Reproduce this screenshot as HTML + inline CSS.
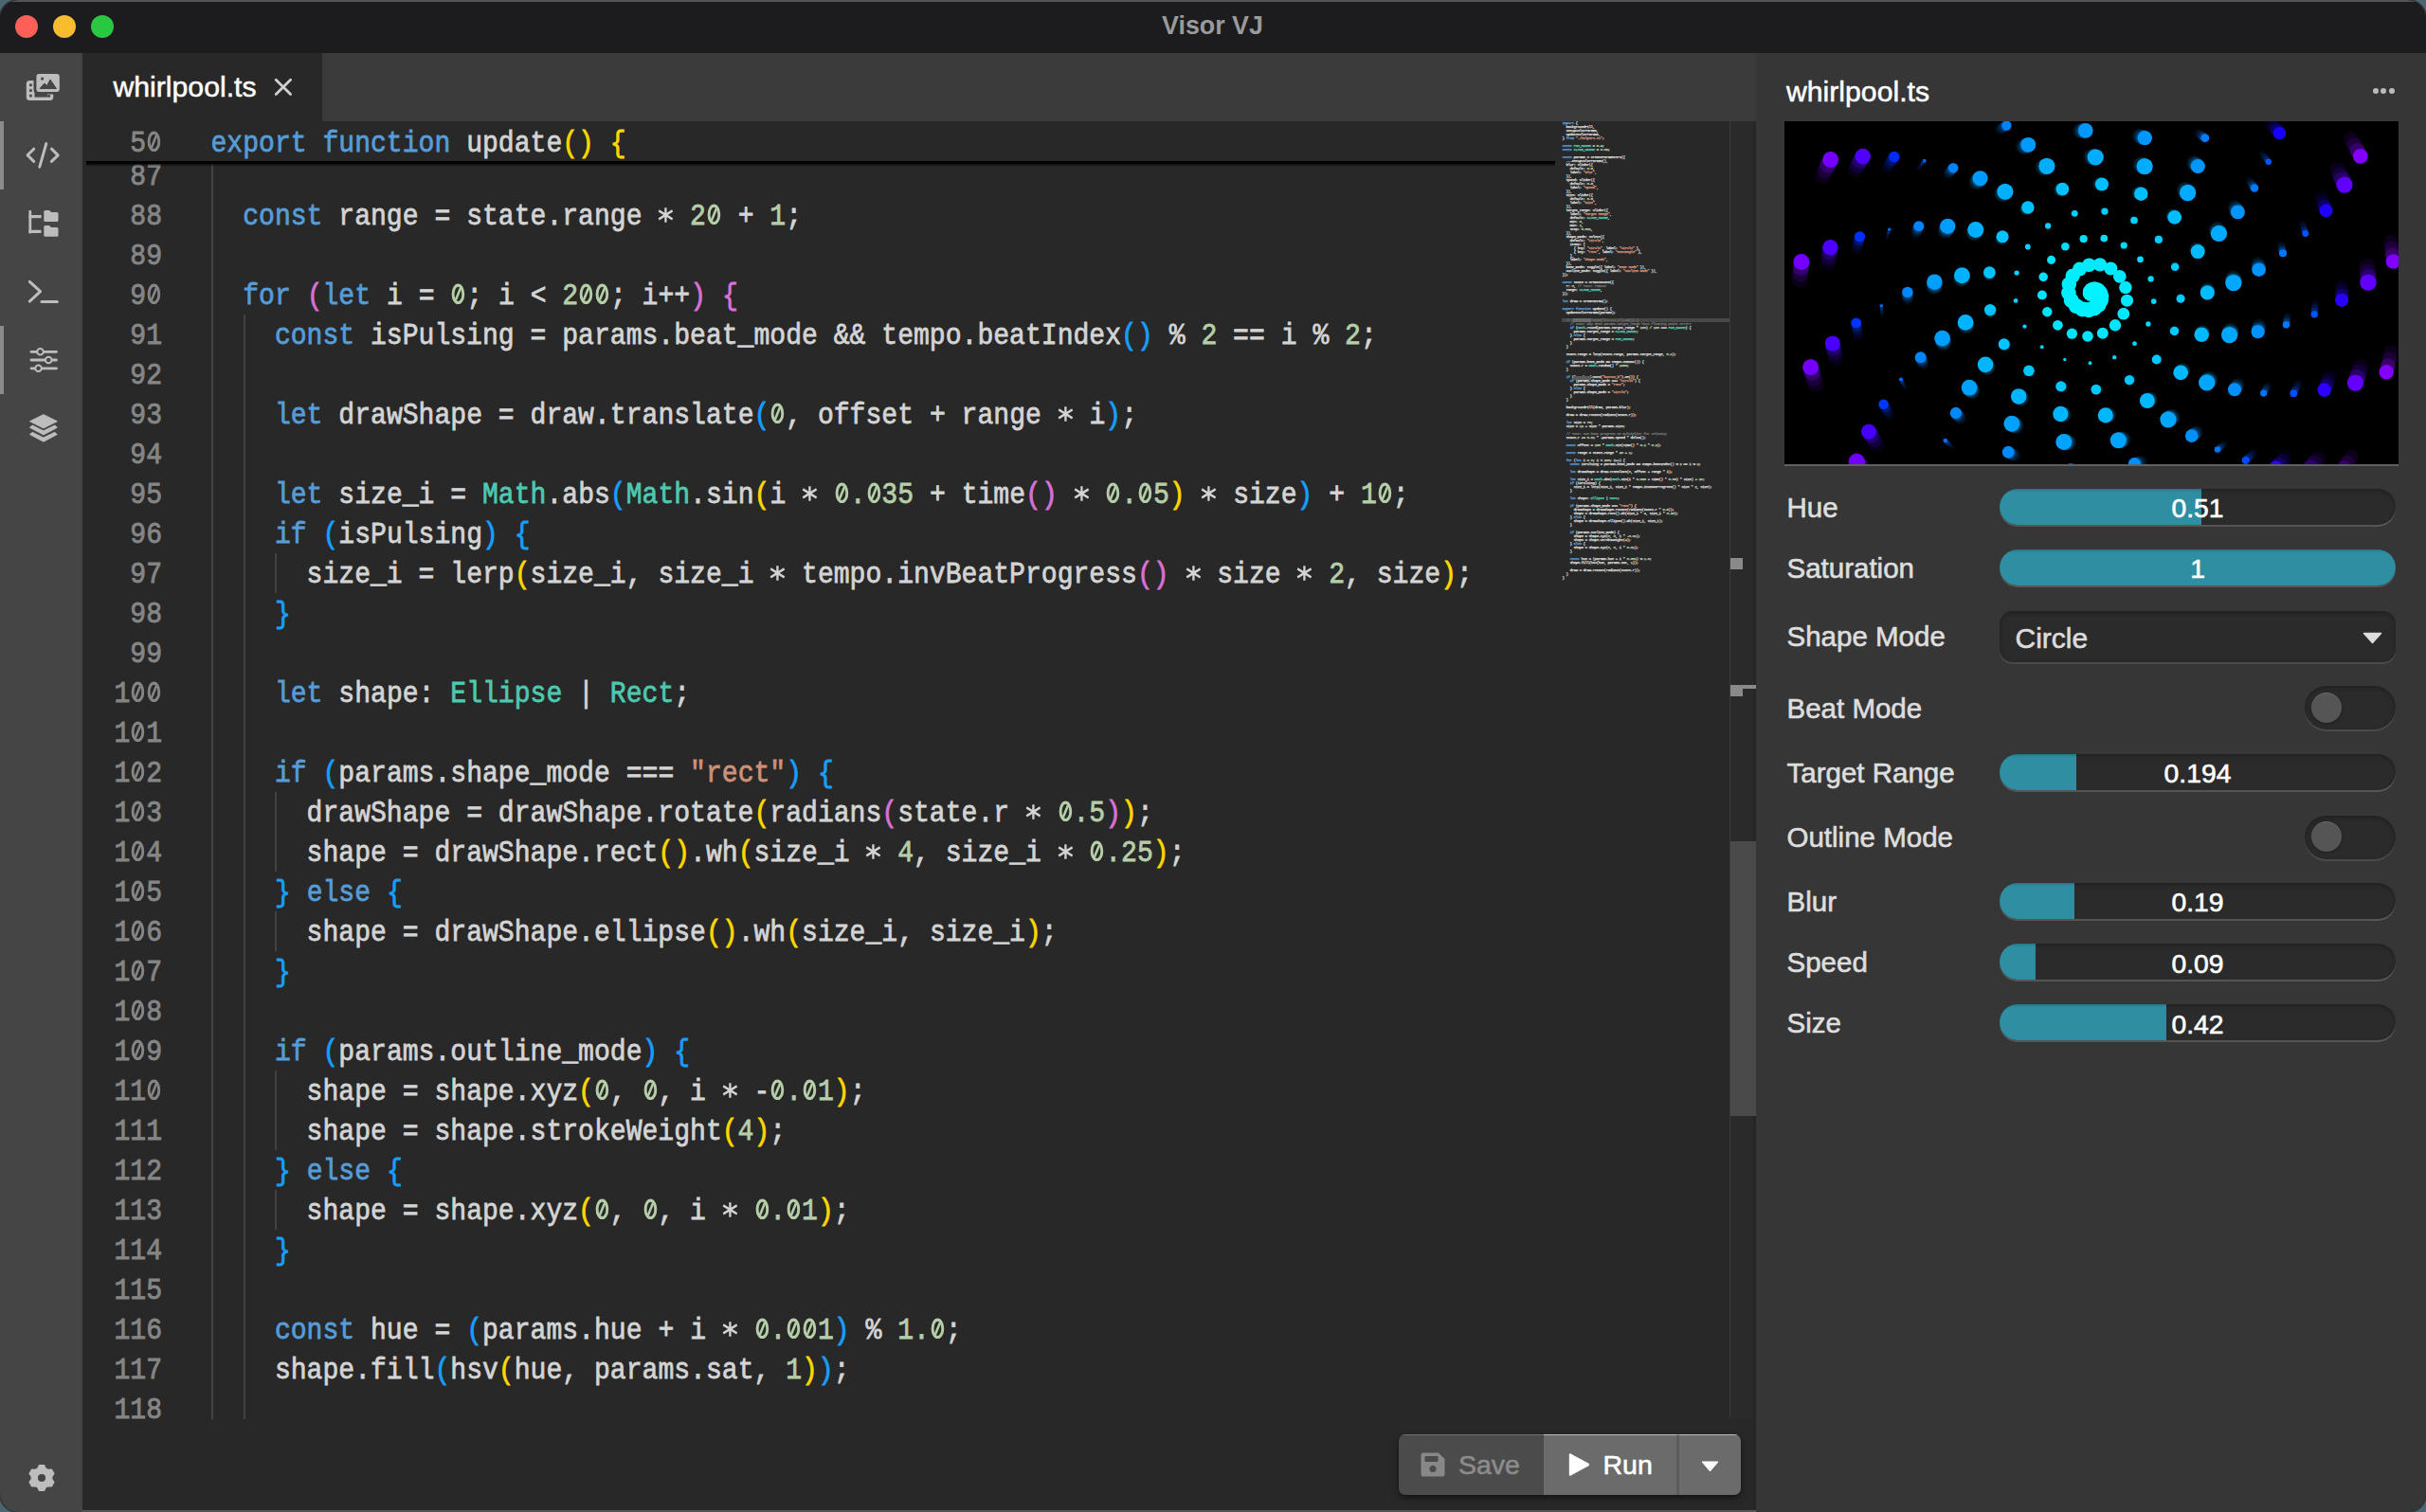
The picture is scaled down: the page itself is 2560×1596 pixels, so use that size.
<!DOCTYPE html><html><head><meta charset="utf-8"><style>
*{margin:0;padding:0;box-sizing:border-box}
html,body{width:2560px;height:1596px;overflow:hidden;background:#4b6670}
body{position:relative;font-family:"Liberation Sans",sans-serif}
#win{position:absolute;left:0;top:0;width:2560px;height:1596px;border-radius:20px;overflow:hidden;background:#282828;box-shadow:0 0 0 1.5px rgba(40,40,40,.7)}
.tl{position:absolute;top:16px;width:24px;height:24px;border-radius:50%}
.ln{position:absolute;left:87px;width:84px;height:42px;text-align:right;font-family:"Liberation Mono",monospace;font-size:28.09px;line-height:42px;color:#858585;white-space:pre;transform:scaleY(1.12);transform-origin:0 28.5px;-webkit-text-stroke:0.8px #858585}
.cl{position:absolute;left:222.5px;height:42px;font-family:"Liberation Mono",monospace;font-size:28.09px;line-height:42px;color:#d4d4d4;white-space:pre;transform:scaleY(1.12);transform-origin:0 28.5px;-webkit-text-stroke:0.7px currentColor}
.cl span{-webkit-text-stroke:0.7px currentColor}
.ast{display:inline-block;vertical-align:baseline}
.mm{position:absolute;left:1648.5px;height:4px;font-family:"Liberation Mono",monospace;font-size:4.4px;letter-spacing:-0.64px;line-height:4px;color:#d4d4d4;white-space:pre;-webkit-text-stroke:0.25px currentColor}
.mm span{-webkit-text-stroke:0.25px currentColor}
.lbl{position:absolute}
.sl{position:absolute;left:2110px;width:418px;height:38px;border-radius:19px;background:#2b2b2b;overflow:hidden;box-shadow:inset 0 2px 4px rgba(0,0,0,.25),0 2px 0 #555}
.sl .f{position:absolute;left:0;top:0;height:38px;background:#2e8ea2;box-shadow:inset 0 3px 3px -2px rgba(0,0,0,.25)}
.tg{position:absolute;left:2432px;width:96px;height:46px;border-radius:23px;background:#2b2b2b;box-shadow:inset 0 2px 5px rgba(0,0,0,.3),0 2px 0 #4a4a4a}
.tg .k{position:absolute;left:7px;top:6.5px;width:32px;height:32px;border-radius:50%;background:#555;box-shadow:inset 0 1px 0 rgba(255,255,255,.12),0 1px 3px rgba(0,0,0,.35)}
</style></head><body><div id="win">
<div style="position:absolute;left:0;top:0;width:2560px;height:56px;background:#1c1c1e"></div>
<div style="position:absolute;left:0;top:0;width:2560px;height:2px;background:#555"></div>
<div style="position:absolute;left:1129.50px;width:300px;text-align:center;top:13.81px;font-size:26.8px;line-height:26.8px;color:#9a9a9a;white-space:nowrap;font-weight:bold;-webkit-text-stroke:0px #9a9a9a">Visor VJ</div>
<div class="tl" style="left:16px;background:#fe5f57"></div><div class="tl" style="left:56px;background:#f8bd2e"></div><div class="tl" style="left:96px;background:#29c840"></div>
<div style="position:absolute;left:0;top:56px;width:87px;height:1540px;background:#454545"></div>

<div style="position:absolute;left:0;top:128px;width:4px;height:72px;background:#8c8c8c"></div>
<div style="position:absolute;left:0;top:344px;width:4px;height:72px;background:#8c8c8c"></div>
<svg style="position:absolute;left:0;top:56px" width="87" height="440" viewBox="0 56 87 440">
  <!-- media icon -->
  <rect x="27.8" y="85" width="28.4" height="21" rx="3.5" fill="#bdbdbd"/>
  <rect x="35.5" y="75.5" width="30" height="24" rx="5" fill="#454545"/>
  <rect x="38.4" y="78" width="24.4" height="19" rx="3" fill="#bdbdbd"/>
  <circle cx="32.4" cy="89.8" r="1.5" fill="#454545"/>
  <circle cx="32.4" cy="95.4" r="1.5" fill="#454545"/>
  <circle cx="32.4" cy="101" r="1.5" fill="#454545"/>
  <circle cx="51.6" cy="101.2" r="1.5" fill="#454545"/>
  <rect x="36.5" y="97" width="13.5" height="5.6" fill="#454545"/>
  <circle cx="44.6" cy="83.1" r="1.6" fill="#454545"/>
  <path d="M42 93.5 L47 88 L49.5 90.5 L53 84 L59.5 93.5 Z" fill="#454545" stroke="#454545" stroke-width="1" stroke-linejoin="round"/>
  <!-- code icon -->
  <g fill="none" stroke="#bdbdbd" stroke-width="3" stroke-linecap="round" stroke-linejoin="round">
    <path d="M35.7 157.2 L29 163.8 L35.7 170.4"/>
    <path d="M54.4 157.2 L61.2 163.8 L54.4 170.4"/>
    <path d="M48.8 151.6 L41.8 176.2"/>
  </g>
  <!-- tree icon -->
  <g fill="#bdbdbd">
    <rect x="30.4" y="222" width="2.8" height="24.5" rx="1"/>
    <rect x="30.4" y="227" width="13.2" height="3.2"/>
    <rect x="30.4" y="242.8" width="13.2" height="3.2" rx="1"/>
    <path d="M46.3 223.5 Q46.3 222 47.8 222 L52 222 L54 224 L60 224 Q61.5 224 61.5 225.5 L61.5 232.5 Q61.5 234 60 234 L47.8 234 Q46.3 234 46.3 232.5 Z"/>
    <path d="M46.3 239.5 Q46.3 238 47.8 238 L52 238 L54 240 L60 240 Q61.5 240 61.5 241.5 L61.5 248.3 Q61.5 249.8 60 249.8 L47.8 249.8 Q46.3 249.8 46.3 248.3 Z"/>
  </g>
  <!-- terminal icon -->
  <g fill="none" stroke="#bdbdbd" stroke-width="3" stroke-linecap="round" stroke-linejoin="round">
    <path d="M31.3 297.3 L42.6 307.7 L31.3 318.1"/>
    <path d="M44 318.4 L60.3 318.4"/>
  </g>
  <!-- sliders icon -->
  <g stroke="#bdbdbd" stroke-width="2.8" stroke-linecap="round" fill="none">
    <path d="M33 371.3 H59.5"/><path d="M33 380 H59.5"/><path d="M33 388.8 H59.5"/>
  </g>
  <g fill="#454545" stroke="#bdbdbd" stroke-width="2">
    <circle cx="42.5" cy="371.3" r="3.3"/><circle cx="51.2" cy="380" r="3.3"/><circle cx="40.5" cy="388.8" r="3.3"/>
  </g>
  <!-- layers icon -->
  <g fill="#bdbdbd" stroke="#bdbdbd" stroke-width="1.2" stroke-linejoin="round">
    <path d="M31.8 444.8 L45.9 437.9 L60 444.8 L45.9 451.7 Z"/>
    <path d="M34.2 449.3 L45.9 455 L57.6 449.3 L60 451.2 L45.9 458.6 L31.8 451.2 Z"/>
    <path d="M34.2 456.6 L45.9 462.3 L57.6 456.6 L60 458.5 L45.9 466 L31.8 458.5 Z"/>
  </g>
</svg>
<svg style="position:absolute;left:23.9px;top:1539.9px" width="40" height="40" viewBox="0 0 40 40"><path fill="#bdbdbd" stroke="#bdbdbd" stroke-width="2.2" stroke-linejoin="round" d="M16.40 10.10 L17.70 7.00 L22.30 7.00 L23.60 10.10 L26.77 11.93 L30.11 11.51 L32.41 15.49 L30.37 18.17 L30.37 21.83 L32.41 24.51 L30.11 28.49 L26.77 28.07 L23.60 29.90 L22.30 33.00 L17.70 33.00 L16.40 29.90 L13.23 28.07 L9.89 28.49 L7.59 24.51 L9.63 21.83 L9.63 18.17 L7.59 15.49 L9.89 11.51 L13.23 11.93 Z"/><circle cx="20" cy="20" r="4.1" fill="#454545"/></svg>

<div style="position:absolute;left:87px;top:56px;width:1766px;height:72px;background:#3b3b3b"></div>
<div style="position:absolute;left:87px;top:56px;width:253px;height:72px;background:#282828"></div>
<div style="position:absolute;left:119.5px;top:77.24px;font-size:30.2px;line-height:30.2px;color:#ffffff;font-weight:normal;white-space:nowrap;-webkit-text-stroke:0.5px #ffffff;">whirlpool.ts</div>
<svg style="position:absolute;left:288px;top:81px" width="22" height="22" viewBox="0 0 22 22"><path d="M3.2 3.2 L18.6 18.6 M18.6 3.2 L3.2 18.6" stroke="#d0d0d0" stroke-width="2.8" stroke-linecap="round"/></svg>
<div style="position:absolute;left:222.9px;top:170.0px;width:2px;height:36.4px;background:#424242"></div>
<div style="position:absolute;left:222.9px;top:206.4px;width:2px;height:42.0px;background:#424242"></div>
<div style="position:absolute;left:222.9px;top:248.4px;width:2px;height:42.0px;background:#424242"></div>
<div style="position:absolute;left:222.9px;top:290.4px;width:2px;height:42.0px;background:#424242"></div>
<div style="position:absolute;left:222.9px;top:332.4px;width:2px;height:42.0px;background:#424242"></div>
<div style="position:absolute;left:256.6px;top:332.4px;width:2px;height:42.0px;background:#424242"></div>
<div style="position:absolute;left:222.9px;top:374.4px;width:2px;height:42.0px;background:#424242"></div>
<div style="position:absolute;left:256.6px;top:374.4px;width:2px;height:42.0px;background:#424242"></div>
<div style="position:absolute;left:222.9px;top:416.4px;width:2px;height:42.0px;background:#424242"></div>
<div style="position:absolute;left:256.6px;top:416.4px;width:2px;height:42.0px;background:#424242"></div>
<div style="position:absolute;left:222.9px;top:458.4px;width:2px;height:42.0px;background:#424242"></div>
<div style="position:absolute;left:256.6px;top:458.4px;width:2px;height:42.0px;background:#424242"></div>
<div style="position:absolute;left:222.9px;top:500.4px;width:2px;height:42.0px;background:#424242"></div>
<div style="position:absolute;left:256.6px;top:500.4px;width:2px;height:42.0px;background:#424242"></div>
<div style="position:absolute;left:222.9px;top:542.4px;width:2px;height:42.0px;background:#424242"></div>
<div style="position:absolute;left:256.6px;top:542.4px;width:2px;height:42.0px;background:#424242"></div>
<div style="position:absolute;left:222.9px;top:584.4px;width:2px;height:42.0px;background:#424242"></div>
<div style="position:absolute;left:256.6px;top:584.4px;width:2px;height:42.0px;background:#424242"></div>
<div style="position:absolute;left:290.3px;top:584.4px;width:2px;height:42.0px;background:#424242"></div>
<div style="position:absolute;left:222.9px;top:626.4px;width:2px;height:42.0px;background:#424242"></div>
<div style="position:absolute;left:256.6px;top:626.4px;width:2px;height:42.0px;background:#424242"></div>
<div style="position:absolute;left:222.9px;top:668.4px;width:2px;height:42.0px;background:#424242"></div>
<div style="position:absolute;left:256.6px;top:668.4px;width:2px;height:42.0px;background:#424242"></div>
<div style="position:absolute;left:222.9px;top:710.4px;width:2px;height:42.0px;background:#424242"></div>
<div style="position:absolute;left:256.6px;top:710.4px;width:2px;height:42.0px;background:#424242"></div>
<div style="position:absolute;left:222.9px;top:752.4px;width:2px;height:42.0px;background:#424242"></div>
<div style="position:absolute;left:256.6px;top:752.4px;width:2px;height:42.0px;background:#424242"></div>
<div style="position:absolute;left:222.9px;top:794.4px;width:2px;height:42.0px;background:#424242"></div>
<div style="position:absolute;left:256.6px;top:794.4px;width:2px;height:42.0px;background:#424242"></div>
<div style="position:absolute;left:222.9px;top:836.4px;width:2px;height:42.0px;background:#424242"></div>
<div style="position:absolute;left:256.6px;top:836.4px;width:2px;height:42.0px;background:#424242"></div>
<div style="position:absolute;left:290.3px;top:836.4px;width:2px;height:42.0px;background:#424242"></div>
<div style="position:absolute;left:222.9px;top:878.4px;width:2px;height:42.0px;background:#424242"></div>
<div style="position:absolute;left:256.6px;top:878.4px;width:2px;height:42.0px;background:#424242"></div>
<div style="position:absolute;left:290.3px;top:878.4px;width:2px;height:42.0px;background:#424242"></div>
<div style="position:absolute;left:222.9px;top:920.4px;width:2px;height:42.0px;background:#424242"></div>
<div style="position:absolute;left:256.6px;top:920.4px;width:2px;height:42.0px;background:#424242"></div>
<div style="position:absolute;left:222.9px;top:962.4px;width:2px;height:42.0px;background:#424242"></div>
<div style="position:absolute;left:256.6px;top:962.4px;width:2px;height:42.0px;background:#424242"></div>
<div style="position:absolute;left:290.3px;top:962.4px;width:2px;height:42.0px;background:#424242"></div>
<div style="position:absolute;left:222.9px;top:1004.4px;width:2px;height:42.0px;background:#424242"></div>
<div style="position:absolute;left:256.6px;top:1004.4px;width:2px;height:42.0px;background:#424242"></div>
<div style="position:absolute;left:222.9px;top:1046.4px;width:2px;height:42.0px;background:#424242"></div>
<div style="position:absolute;left:256.6px;top:1046.4px;width:2px;height:42.0px;background:#424242"></div>
<div style="position:absolute;left:222.9px;top:1088.4px;width:2px;height:42.0px;background:#424242"></div>
<div style="position:absolute;left:256.6px;top:1088.4px;width:2px;height:42.0px;background:#424242"></div>
<div style="position:absolute;left:222.9px;top:1130.4px;width:2px;height:42.0px;background:#424242"></div>
<div style="position:absolute;left:256.6px;top:1130.4px;width:2px;height:42.0px;background:#424242"></div>
<div style="position:absolute;left:290.3px;top:1130.4px;width:2px;height:42.0px;background:#424242"></div>
<div style="position:absolute;left:222.9px;top:1172.4px;width:2px;height:42.0px;background:#424242"></div>
<div style="position:absolute;left:256.6px;top:1172.4px;width:2px;height:42.0px;background:#424242"></div>
<div style="position:absolute;left:290.3px;top:1172.4px;width:2px;height:42.0px;background:#424242"></div>
<div style="position:absolute;left:222.9px;top:1214.4px;width:2px;height:42.0px;background:#424242"></div>
<div style="position:absolute;left:256.6px;top:1214.4px;width:2px;height:42.0px;background:#424242"></div>
<div style="position:absolute;left:222.9px;top:1256.4px;width:2px;height:42.0px;background:#424242"></div>
<div style="position:absolute;left:256.6px;top:1256.4px;width:2px;height:42.0px;background:#424242"></div>
<div style="position:absolute;left:290.3px;top:1256.4px;width:2px;height:42.0px;background:#424242"></div>
<div style="position:absolute;left:222.9px;top:1298.4px;width:2px;height:42.0px;background:#424242"></div>
<div style="position:absolute;left:256.6px;top:1298.4px;width:2px;height:42.0px;background:#424242"></div>
<div style="position:absolute;left:222.9px;top:1340.4px;width:2px;height:42.0px;background:#424242"></div>
<div style="position:absolute;left:256.6px;top:1340.4px;width:2px;height:42.0px;background:#424242"></div>
<div style="position:absolute;left:222.9px;top:1382.4px;width:2px;height:42.0px;background:#424242"></div>
<div style="position:absolute;left:256.6px;top:1382.4px;width:2px;height:42.0px;background:#424242"></div>
<div style="position:absolute;left:222.9px;top:1424.4px;width:2px;height:42.0px;background:#424242"></div>
<div style="position:absolute;left:256.6px;top:1424.4px;width:2px;height:42.0px;background:#424242"></div>
<div style="position:absolute;left:222.9px;top:1466.4px;width:2px;height:31.6px;background:#424242"></div>
<div style="position:absolute;left:256.6px;top:1466.4px;width:2px;height:31.6px;background:#424242"></div>
<div class="ln" style="top:132px">5<svg class="ast" width="16.854" height="20" viewBox="0 0 16.854 20"><ellipse cx="8.43" cy="10.6" rx="5.35" ry="8.3" stroke="#858585" stroke-width="2.9" fill="none"/><path d="M5.9 16.2L11.0 5.0" stroke="#858585" stroke-width="2.5"/></svg></div><div class="cl" style="top:132px"><span style="color:#569cd6">export</span> <span style="color:#569cd6">function</span> <span style="color:#d4d4d4">update</span><span style="color:#ffd700">(</span><span style="color:#ffd700">)</span> <span style="color:#ffd700">{</span></div>
<div class="ln" style="top:166.8px">87</div><div class="cl" style="top:166.8px"></div>
<div class="ln" style="top:208.8px">88</div><div class="cl" style="top:208.8px">  <span style="color:#569cd6">const</span> <span style="color:#d4d4d4">range</span> <span style="color:#d4d4d4">=</span> <span style="color:#d4d4d4">state</span><span style="color:#d4d4d4">.</span><span style="color:#d4d4d4">range</span> <span style="color:#d4d4d4"><svg class="ast" width="16.854" height="16.3" viewBox="0 0 16.854 16.3"><path d="M8.43 0.3V14M1.2 3.1L15.65 11.1M1.2 11.1L15.65 3.1" stroke="#d4d4d4" stroke-width="2.3" fill="none"/></svg></span> <span style="color:#b5cea8">2<svg class="ast" width="16.854" height="20" viewBox="0 0 16.854 20"><ellipse cx="8.43" cy="10.6" rx="5.35" ry="8.3" stroke="#b5cea8" stroke-width="2.9" fill="none"/><path d="M5.9 16.2L11.0 5.0" stroke="#b5cea8" stroke-width="2.5"/></svg></span> <span style="color:#d4d4d4">+</span> <span style="color:#b5cea8">1</span><span style="color:#d4d4d4">;</span></div>
<div class="ln" style="top:250.8px">89</div><div class="cl" style="top:250.8px"></div>
<div class="ln" style="top:292.8px">9<svg class="ast" width="16.854" height="20" viewBox="0 0 16.854 20"><ellipse cx="8.43" cy="10.6" rx="5.35" ry="8.3" stroke="#858585" stroke-width="2.9" fill="none"/><path d="M5.9 16.2L11.0 5.0" stroke="#858585" stroke-width="2.5"/></svg></div><div class="cl" style="top:292.8px">  <span style="color:#569cd6">for</span> <span style="color:#da70d6">(</span><span style="color:#569cd6">let</span> <span style="color:#d4d4d4">i</span> <span style="color:#d4d4d4">=</span> <span style="color:#b5cea8"><svg class="ast" width="16.854" height="20" viewBox="0 0 16.854 20"><ellipse cx="8.43" cy="10.6" rx="5.35" ry="8.3" stroke="#b5cea8" stroke-width="2.9" fill="none"/><path d="M5.9 16.2L11.0 5.0" stroke="#b5cea8" stroke-width="2.5"/></svg></span><span style="color:#d4d4d4">;</span> <span style="color:#d4d4d4">i</span> <span style="color:#d4d4d4">&lt;</span> <span style="color:#b5cea8">2<svg class="ast" width="16.854" height="20" viewBox="0 0 16.854 20"><ellipse cx="8.43" cy="10.6" rx="5.35" ry="8.3" stroke="#b5cea8" stroke-width="2.9" fill="none"/><path d="M5.9 16.2L11.0 5.0" stroke="#b5cea8" stroke-width="2.5"/></svg><svg class="ast" width="16.854" height="20" viewBox="0 0 16.854 20"><ellipse cx="8.43" cy="10.6" rx="5.35" ry="8.3" stroke="#b5cea8" stroke-width="2.9" fill="none"/><path d="M5.9 16.2L11.0 5.0" stroke="#b5cea8" stroke-width="2.5"/></svg></span><span style="color:#d4d4d4">;</span> <span style="color:#d4d4d4">i</span><span style="color:#d4d4d4">+</span><span style="color:#d4d4d4">+</span><span style="color:#da70d6">)</span> <span style="color:#da70d6">{</span></div>
<div class="ln" style="top:334.8px">91</div><div class="cl" style="top:334.8px">    <span style="color:#569cd6">const</span> <span style="color:#d4d4d4">isPulsing</span> <span style="color:#d4d4d4">=</span> <span style="color:#d4d4d4">params</span><span style="color:#d4d4d4">.</span><span style="color:#d4d4d4">beat_mode</span> <span style="color:#d4d4d4">&amp;</span><span style="color:#d4d4d4">&amp;</span> <span style="color:#d4d4d4">tempo</span><span style="color:#d4d4d4">.</span><span style="color:#d4d4d4">beatIndex</span><span style="color:#179fff">(</span><span style="color:#179fff">)</span> <span style="color:#d4d4d4">%</span> <span style="color:#b5cea8">2</span> <span style="color:#d4d4d4">=</span><span style="color:#d4d4d4">=</span> <span style="color:#d4d4d4">i</span> <span style="color:#d4d4d4">%</span> <span style="color:#b5cea8">2</span><span style="color:#d4d4d4">;</span></div>
<div class="ln" style="top:376.8px">92</div><div class="cl" style="top:376.8px"></div>
<div class="ln" style="top:418.8px">93</div><div class="cl" style="top:418.8px">    <span style="color:#569cd6">let</span> <span style="color:#d4d4d4">drawShape</span> <span style="color:#d4d4d4">=</span> <span style="color:#d4d4d4">draw</span><span style="color:#d4d4d4">.</span><span style="color:#d4d4d4">translate</span><span style="color:#179fff">(</span><span style="color:#b5cea8"><svg class="ast" width="16.854" height="20" viewBox="0 0 16.854 20"><ellipse cx="8.43" cy="10.6" rx="5.35" ry="8.3" stroke="#b5cea8" stroke-width="2.9" fill="none"/><path d="M5.9 16.2L11.0 5.0" stroke="#b5cea8" stroke-width="2.5"/></svg></span><span style="color:#d4d4d4">,</span> <span style="color:#d4d4d4">offset</span> <span style="color:#d4d4d4">+</span> <span style="color:#d4d4d4">range</span> <span style="color:#d4d4d4"><svg class="ast" width="16.854" height="16.3" viewBox="0 0 16.854 16.3"><path d="M8.43 0.3V14M1.2 3.1L15.65 11.1M1.2 11.1L15.65 3.1" stroke="#d4d4d4" stroke-width="2.3" fill="none"/></svg></span> <span style="color:#d4d4d4">i</span><span style="color:#179fff">)</span><span style="color:#d4d4d4">;</span></div>
<div class="ln" style="top:460.8px">94</div><div class="cl" style="top:460.8px"></div>
<div class="ln" style="top:502.8px">95</div><div class="cl" style="top:502.8px">    <span style="color:#569cd6">let</span> <span style="color:#d4d4d4">size_i</span> <span style="color:#d4d4d4">=</span> <span style="color:#4ec9b0">Math</span><span style="color:#d4d4d4">.</span><span style="color:#d4d4d4">abs</span><span style="color:#179fff">(</span><span style="color:#4ec9b0">Math</span><span style="color:#d4d4d4">.</span><span style="color:#d4d4d4">sin</span><span style="color:#ffd700">(</span><span style="color:#d4d4d4">i</span> <span style="color:#d4d4d4"><svg class="ast" width="16.854" height="16.3" viewBox="0 0 16.854 16.3"><path d="M8.43 0.3V14M1.2 3.1L15.65 11.1M1.2 11.1L15.65 3.1" stroke="#d4d4d4" stroke-width="2.3" fill="none"/></svg></span> <span style="color:#b5cea8"><svg class="ast" width="16.854" height="20" viewBox="0 0 16.854 20"><ellipse cx="8.43" cy="10.6" rx="5.35" ry="8.3" stroke="#b5cea8" stroke-width="2.9" fill="none"/><path d="M5.9 16.2L11.0 5.0" stroke="#b5cea8" stroke-width="2.5"/></svg>.<svg class="ast" width="16.854" height="20" viewBox="0 0 16.854 20"><ellipse cx="8.43" cy="10.6" rx="5.35" ry="8.3" stroke="#b5cea8" stroke-width="2.9" fill="none"/><path d="M5.9 16.2L11.0 5.0" stroke="#b5cea8" stroke-width="2.5"/></svg>35</span> <span style="color:#d4d4d4">+</span> <span style="color:#d4d4d4">time</span><span style="color:#da70d6">(</span><span style="color:#da70d6">)</span> <span style="color:#d4d4d4"><svg class="ast" width="16.854" height="16.3" viewBox="0 0 16.854 16.3"><path d="M8.43 0.3V14M1.2 3.1L15.65 11.1M1.2 11.1L15.65 3.1" stroke="#d4d4d4" stroke-width="2.3" fill="none"/></svg></span> <span style="color:#b5cea8"><svg class="ast" width="16.854" height="20" viewBox="0 0 16.854 20"><ellipse cx="8.43" cy="10.6" rx="5.35" ry="8.3" stroke="#b5cea8" stroke-width="2.9" fill="none"/><path d="M5.9 16.2L11.0 5.0" stroke="#b5cea8" stroke-width="2.5"/></svg>.<svg class="ast" width="16.854" height="20" viewBox="0 0 16.854 20"><ellipse cx="8.43" cy="10.6" rx="5.35" ry="8.3" stroke="#b5cea8" stroke-width="2.9" fill="none"/><path d="M5.9 16.2L11.0 5.0" stroke="#b5cea8" stroke-width="2.5"/></svg>5</span><span style="color:#ffd700">)</span> <span style="color:#d4d4d4"><svg class="ast" width="16.854" height="16.3" viewBox="0 0 16.854 16.3"><path d="M8.43 0.3V14M1.2 3.1L15.65 11.1M1.2 11.1L15.65 3.1" stroke="#d4d4d4" stroke-width="2.3" fill="none"/></svg></span> <span style="color:#d4d4d4">size</span><span style="color:#179fff">)</span> <span style="color:#d4d4d4">+</span> <span style="color:#b5cea8">1<svg class="ast" width="16.854" height="20" viewBox="0 0 16.854 20"><ellipse cx="8.43" cy="10.6" rx="5.35" ry="8.3" stroke="#b5cea8" stroke-width="2.9" fill="none"/><path d="M5.9 16.2L11.0 5.0" stroke="#b5cea8" stroke-width="2.5"/></svg></span><span style="color:#d4d4d4">;</span></div>
<div class="ln" style="top:544.8px">96</div><div class="cl" style="top:544.8px">    <span style="color:#569cd6">if</span> <span style="color:#179fff">(</span><span style="color:#d4d4d4">isPulsing</span><span style="color:#179fff">)</span> <span style="color:#179fff">{</span></div>
<div class="ln" style="top:586.8px">97</div><div class="cl" style="top:586.8px">      <span style="color:#d4d4d4">size_i</span> <span style="color:#d4d4d4">=</span> <span style="color:#d4d4d4">lerp</span><span style="color:#ffd700">(</span><span style="color:#d4d4d4">size_i</span><span style="color:#d4d4d4">,</span> <span style="color:#d4d4d4">size_i</span> <span style="color:#d4d4d4"><svg class="ast" width="16.854" height="16.3" viewBox="0 0 16.854 16.3"><path d="M8.43 0.3V14M1.2 3.1L15.65 11.1M1.2 11.1L15.65 3.1" stroke="#d4d4d4" stroke-width="2.3" fill="none"/></svg></span> <span style="color:#d4d4d4">tempo</span><span style="color:#d4d4d4">.</span><span style="color:#d4d4d4">invBeatProgress</span><span style="color:#da70d6">(</span><span style="color:#da70d6">)</span> <span style="color:#d4d4d4"><svg class="ast" width="16.854" height="16.3" viewBox="0 0 16.854 16.3"><path d="M8.43 0.3V14M1.2 3.1L15.65 11.1M1.2 11.1L15.65 3.1" stroke="#d4d4d4" stroke-width="2.3" fill="none"/></svg></span> <span style="color:#d4d4d4">size</span> <span style="color:#d4d4d4"><svg class="ast" width="16.854" height="16.3" viewBox="0 0 16.854 16.3"><path d="M8.43 0.3V14M1.2 3.1L15.65 11.1M1.2 11.1L15.65 3.1" stroke="#d4d4d4" stroke-width="2.3" fill="none"/></svg></span> <span style="color:#b5cea8">2</span><span style="color:#d4d4d4">,</span> <span style="color:#d4d4d4">size</span><span style="color:#ffd700">)</span><span style="color:#d4d4d4">;</span></div>
<div class="ln" style="top:628.8px">98</div><div class="cl" style="top:628.8px">    <span style="color:#179fff">}</span></div>
<div class="ln" style="top:670.8px">99</div><div class="cl" style="top:670.8px"></div>
<div class="ln" style="top:712.8px">1<svg class="ast" width="16.854" height="20" viewBox="0 0 16.854 20"><ellipse cx="8.43" cy="10.6" rx="5.35" ry="8.3" stroke="#858585" stroke-width="2.9" fill="none"/><path d="M5.9 16.2L11.0 5.0" stroke="#858585" stroke-width="2.5"/></svg><svg class="ast" width="16.854" height="20" viewBox="0 0 16.854 20"><ellipse cx="8.43" cy="10.6" rx="5.35" ry="8.3" stroke="#858585" stroke-width="2.9" fill="none"/><path d="M5.9 16.2L11.0 5.0" stroke="#858585" stroke-width="2.5"/></svg></div><div class="cl" style="top:712.8px">    <span style="color:#569cd6">let</span> <span style="color:#d4d4d4">shape</span><span style="color:#d4d4d4">:</span> <span style="color:#4ec9b0">Ellipse</span> <span style="color:#d4d4d4">|</span> <span style="color:#4ec9b0">Rect</span><span style="color:#d4d4d4">;</span></div>
<div class="ln" style="top:754.8px">1<svg class="ast" width="16.854" height="20" viewBox="0 0 16.854 20"><ellipse cx="8.43" cy="10.6" rx="5.35" ry="8.3" stroke="#858585" stroke-width="2.9" fill="none"/><path d="M5.9 16.2L11.0 5.0" stroke="#858585" stroke-width="2.5"/></svg>1</div><div class="cl" style="top:754.8px"></div>
<div class="ln" style="top:796.8px">1<svg class="ast" width="16.854" height="20" viewBox="0 0 16.854 20"><ellipse cx="8.43" cy="10.6" rx="5.35" ry="8.3" stroke="#858585" stroke-width="2.9" fill="none"/><path d="M5.9 16.2L11.0 5.0" stroke="#858585" stroke-width="2.5"/></svg>2</div><div class="cl" style="top:796.8px">    <span style="color:#569cd6">if</span> <span style="color:#179fff">(</span><span style="color:#d4d4d4">params</span><span style="color:#d4d4d4">.</span><span style="color:#d4d4d4">shape_mode</span> <span style="color:#d4d4d4">=</span><span style="color:#d4d4d4">=</span><span style="color:#d4d4d4">=</span> <span style="color:#ce9178">&quot;rect&quot;</span><span style="color:#179fff">)</span> <span style="color:#179fff">{</span></div>
<div class="ln" style="top:838.8px">1<svg class="ast" width="16.854" height="20" viewBox="0 0 16.854 20"><ellipse cx="8.43" cy="10.6" rx="5.35" ry="8.3" stroke="#858585" stroke-width="2.9" fill="none"/><path d="M5.9 16.2L11.0 5.0" stroke="#858585" stroke-width="2.5"/></svg>3</div><div class="cl" style="top:838.8px">      <span style="color:#d4d4d4">drawShape</span> <span style="color:#d4d4d4">=</span> <span style="color:#d4d4d4">drawShape</span><span style="color:#d4d4d4">.</span><span style="color:#d4d4d4">rotate</span><span style="color:#ffd700">(</span><span style="color:#d4d4d4">radians</span><span style="color:#da70d6">(</span><span style="color:#d4d4d4">state</span><span style="color:#d4d4d4">.</span><span style="color:#d4d4d4">r</span> <span style="color:#d4d4d4"><svg class="ast" width="16.854" height="16.3" viewBox="0 0 16.854 16.3"><path d="M8.43 0.3V14M1.2 3.1L15.65 11.1M1.2 11.1L15.65 3.1" stroke="#d4d4d4" stroke-width="2.3" fill="none"/></svg></span> <span style="color:#b5cea8"><svg class="ast" width="16.854" height="20" viewBox="0 0 16.854 20"><ellipse cx="8.43" cy="10.6" rx="5.35" ry="8.3" stroke="#b5cea8" stroke-width="2.9" fill="none"/><path d="M5.9 16.2L11.0 5.0" stroke="#b5cea8" stroke-width="2.5"/></svg>.5</span><span style="color:#da70d6">)</span><span style="color:#ffd700">)</span><span style="color:#d4d4d4">;</span></div>
<div class="ln" style="top:880.8px">1<svg class="ast" width="16.854" height="20" viewBox="0 0 16.854 20"><ellipse cx="8.43" cy="10.6" rx="5.35" ry="8.3" stroke="#858585" stroke-width="2.9" fill="none"/><path d="M5.9 16.2L11.0 5.0" stroke="#858585" stroke-width="2.5"/></svg>4</div><div class="cl" style="top:880.8px">      <span style="color:#d4d4d4">shape</span> <span style="color:#d4d4d4">=</span> <span style="color:#d4d4d4">drawShape</span><span style="color:#d4d4d4">.</span><span style="color:#d4d4d4">rect</span><span style="color:#ffd700">(</span><span style="color:#ffd700">)</span><span style="color:#d4d4d4">.</span><span style="color:#d4d4d4">wh</span><span style="color:#ffd700">(</span><span style="color:#d4d4d4">size_i</span> <span style="color:#d4d4d4"><svg class="ast" width="16.854" height="16.3" viewBox="0 0 16.854 16.3"><path d="M8.43 0.3V14M1.2 3.1L15.65 11.1M1.2 11.1L15.65 3.1" stroke="#d4d4d4" stroke-width="2.3" fill="none"/></svg></span> <span style="color:#b5cea8">4</span><span style="color:#d4d4d4">,</span> <span style="color:#d4d4d4">size_i</span> <span style="color:#d4d4d4"><svg class="ast" width="16.854" height="16.3" viewBox="0 0 16.854 16.3"><path d="M8.43 0.3V14M1.2 3.1L15.65 11.1M1.2 11.1L15.65 3.1" stroke="#d4d4d4" stroke-width="2.3" fill="none"/></svg></span> <span style="color:#b5cea8"><svg class="ast" width="16.854" height="20" viewBox="0 0 16.854 20"><ellipse cx="8.43" cy="10.6" rx="5.35" ry="8.3" stroke="#b5cea8" stroke-width="2.9" fill="none"/><path d="M5.9 16.2L11.0 5.0" stroke="#b5cea8" stroke-width="2.5"/></svg>.25</span><span style="color:#ffd700">)</span><span style="color:#d4d4d4">;</span></div>
<div class="ln" style="top:922.8px">1<svg class="ast" width="16.854" height="20" viewBox="0 0 16.854 20"><ellipse cx="8.43" cy="10.6" rx="5.35" ry="8.3" stroke="#858585" stroke-width="2.9" fill="none"/><path d="M5.9 16.2L11.0 5.0" stroke="#858585" stroke-width="2.5"/></svg>5</div><div class="cl" style="top:922.8px">    <span style="color:#179fff">}</span> <span style="color:#569cd6">else</span> <span style="color:#179fff">{</span></div>
<div class="ln" style="top:964.8px">1<svg class="ast" width="16.854" height="20" viewBox="0 0 16.854 20"><ellipse cx="8.43" cy="10.6" rx="5.35" ry="8.3" stroke="#858585" stroke-width="2.9" fill="none"/><path d="M5.9 16.2L11.0 5.0" stroke="#858585" stroke-width="2.5"/></svg>6</div><div class="cl" style="top:964.8px">      <span style="color:#d4d4d4">shape</span> <span style="color:#d4d4d4">=</span> <span style="color:#d4d4d4">drawShape</span><span style="color:#d4d4d4">.</span><span style="color:#d4d4d4">ellipse</span><span style="color:#ffd700">(</span><span style="color:#ffd700">)</span><span style="color:#d4d4d4">.</span><span style="color:#d4d4d4">wh</span><span style="color:#ffd700">(</span><span style="color:#d4d4d4">size_i</span><span style="color:#d4d4d4">,</span> <span style="color:#d4d4d4">size_i</span><span style="color:#ffd700">)</span><span style="color:#d4d4d4">;</span></div>
<div class="ln" style="top:1006.8px">1<svg class="ast" width="16.854" height="20" viewBox="0 0 16.854 20"><ellipse cx="8.43" cy="10.6" rx="5.35" ry="8.3" stroke="#858585" stroke-width="2.9" fill="none"/><path d="M5.9 16.2L11.0 5.0" stroke="#858585" stroke-width="2.5"/></svg>7</div><div class="cl" style="top:1006.8px">    <span style="color:#179fff">}</span></div>
<div class="ln" style="top:1048.8px">1<svg class="ast" width="16.854" height="20" viewBox="0 0 16.854 20"><ellipse cx="8.43" cy="10.6" rx="5.35" ry="8.3" stroke="#858585" stroke-width="2.9" fill="none"/><path d="M5.9 16.2L11.0 5.0" stroke="#858585" stroke-width="2.5"/></svg>8</div><div class="cl" style="top:1048.8px"></div>
<div class="ln" style="top:1090.8px">1<svg class="ast" width="16.854" height="20" viewBox="0 0 16.854 20"><ellipse cx="8.43" cy="10.6" rx="5.35" ry="8.3" stroke="#858585" stroke-width="2.9" fill="none"/><path d="M5.9 16.2L11.0 5.0" stroke="#858585" stroke-width="2.5"/></svg>9</div><div class="cl" style="top:1090.8px">    <span style="color:#569cd6">if</span> <span style="color:#179fff">(</span><span style="color:#d4d4d4">params</span><span style="color:#d4d4d4">.</span><span style="color:#d4d4d4">outline_mode</span><span style="color:#179fff">)</span> <span style="color:#179fff">{</span></div>
<div class="ln" style="top:1132.8px">11<svg class="ast" width="16.854" height="20" viewBox="0 0 16.854 20"><ellipse cx="8.43" cy="10.6" rx="5.35" ry="8.3" stroke="#858585" stroke-width="2.9" fill="none"/><path d="M5.9 16.2L11.0 5.0" stroke="#858585" stroke-width="2.5"/></svg></div><div class="cl" style="top:1132.8px">      <span style="color:#d4d4d4">shape</span> <span style="color:#d4d4d4">=</span> <span style="color:#d4d4d4">shape</span><span style="color:#d4d4d4">.</span><span style="color:#d4d4d4">xyz</span><span style="color:#ffd700">(</span><span style="color:#b5cea8"><svg class="ast" width="16.854" height="20" viewBox="0 0 16.854 20"><ellipse cx="8.43" cy="10.6" rx="5.35" ry="8.3" stroke="#b5cea8" stroke-width="2.9" fill="none"/><path d="M5.9 16.2L11.0 5.0" stroke="#b5cea8" stroke-width="2.5"/></svg></span><span style="color:#d4d4d4">,</span> <span style="color:#b5cea8"><svg class="ast" width="16.854" height="20" viewBox="0 0 16.854 20"><ellipse cx="8.43" cy="10.6" rx="5.35" ry="8.3" stroke="#b5cea8" stroke-width="2.9" fill="none"/><path d="M5.9 16.2L11.0 5.0" stroke="#b5cea8" stroke-width="2.5"/></svg></span><span style="color:#d4d4d4">,</span> <span style="color:#d4d4d4">i</span> <span style="color:#d4d4d4"><svg class="ast" width="16.854" height="16.3" viewBox="0 0 16.854 16.3"><path d="M8.43 0.3V14M1.2 3.1L15.65 11.1M1.2 11.1L15.65 3.1" stroke="#d4d4d4" stroke-width="2.3" fill="none"/></svg></span> <span style="color:#d4d4d4">-</span><span style="color:#b5cea8"><svg class="ast" width="16.854" height="20" viewBox="0 0 16.854 20"><ellipse cx="8.43" cy="10.6" rx="5.35" ry="8.3" stroke="#b5cea8" stroke-width="2.9" fill="none"/><path d="M5.9 16.2L11.0 5.0" stroke="#b5cea8" stroke-width="2.5"/></svg>.<svg class="ast" width="16.854" height="20" viewBox="0 0 16.854 20"><ellipse cx="8.43" cy="10.6" rx="5.35" ry="8.3" stroke="#b5cea8" stroke-width="2.9" fill="none"/><path d="M5.9 16.2L11.0 5.0" stroke="#b5cea8" stroke-width="2.5"/></svg>1</span><span style="color:#ffd700">)</span><span style="color:#d4d4d4">;</span></div>
<div class="ln" style="top:1174.8px">111</div><div class="cl" style="top:1174.8px">      <span style="color:#d4d4d4">shape</span> <span style="color:#d4d4d4">=</span> <span style="color:#d4d4d4">shape</span><span style="color:#d4d4d4">.</span><span style="color:#d4d4d4">strokeWeight</span><span style="color:#ffd700">(</span><span style="color:#b5cea8">4</span><span style="color:#ffd700">)</span><span style="color:#d4d4d4">;</span></div>
<div class="ln" style="top:1216.8px">112</div><div class="cl" style="top:1216.8px">    <span style="color:#179fff">}</span> <span style="color:#569cd6">else</span> <span style="color:#179fff">{</span></div>
<div class="ln" style="top:1258.8px">113</div><div class="cl" style="top:1258.8px">      <span style="color:#d4d4d4">shape</span> <span style="color:#d4d4d4">=</span> <span style="color:#d4d4d4">shape</span><span style="color:#d4d4d4">.</span><span style="color:#d4d4d4">xyz</span><span style="color:#ffd700">(</span><span style="color:#b5cea8"><svg class="ast" width="16.854" height="20" viewBox="0 0 16.854 20"><ellipse cx="8.43" cy="10.6" rx="5.35" ry="8.3" stroke="#b5cea8" stroke-width="2.9" fill="none"/><path d="M5.9 16.2L11.0 5.0" stroke="#b5cea8" stroke-width="2.5"/></svg></span><span style="color:#d4d4d4">,</span> <span style="color:#b5cea8"><svg class="ast" width="16.854" height="20" viewBox="0 0 16.854 20"><ellipse cx="8.43" cy="10.6" rx="5.35" ry="8.3" stroke="#b5cea8" stroke-width="2.9" fill="none"/><path d="M5.9 16.2L11.0 5.0" stroke="#b5cea8" stroke-width="2.5"/></svg></span><span style="color:#d4d4d4">,</span> <span style="color:#d4d4d4">i</span> <span style="color:#d4d4d4"><svg class="ast" width="16.854" height="16.3" viewBox="0 0 16.854 16.3"><path d="M8.43 0.3V14M1.2 3.1L15.65 11.1M1.2 11.1L15.65 3.1" stroke="#d4d4d4" stroke-width="2.3" fill="none"/></svg></span> <span style="color:#b5cea8"><svg class="ast" width="16.854" height="20" viewBox="0 0 16.854 20"><ellipse cx="8.43" cy="10.6" rx="5.35" ry="8.3" stroke="#b5cea8" stroke-width="2.9" fill="none"/><path d="M5.9 16.2L11.0 5.0" stroke="#b5cea8" stroke-width="2.5"/></svg>.<svg class="ast" width="16.854" height="20" viewBox="0 0 16.854 20"><ellipse cx="8.43" cy="10.6" rx="5.35" ry="8.3" stroke="#b5cea8" stroke-width="2.9" fill="none"/><path d="M5.9 16.2L11.0 5.0" stroke="#b5cea8" stroke-width="2.5"/></svg>1</span><span style="color:#ffd700">)</span><span style="color:#d4d4d4">;</span></div>
<div class="ln" style="top:1300.8px">114</div><div class="cl" style="top:1300.8px">    <span style="color:#179fff">}</span></div>
<div class="ln" style="top:1342.8px">115</div><div class="cl" style="top:1342.8px"></div>
<div class="ln" style="top:1384.8px">116</div><div class="cl" style="top:1384.8px">    <span style="color:#569cd6">const</span> <span style="color:#d4d4d4">hue</span> <span style="color:#d4d4d4">=</span> <span style="color:#179fff">(</span><span style="color:#d4d4d4">params</span><span style="color:#d4d4d4">.</span><span style="color:#d4d4d4">hue</span> <span style="color:#d4d4d4">+</span> <span style="color:#d4d4d4">i</span> <span style="color:#d4d4d4"><svg class="ast" width="16.854" height="16.3" viewBox="0 0 16.854 16.3"><path d="M8.43 0.3V14M1.2 3.1L15.65 11.1M1.2 11.1L15.65 3.1" stroke="#d4d4d4" stroke-width="2.3" fill="none"/></svg></span> <span style="color:#b5cea8"><svg class="ast" width="16.854" height="20" viewBox="0 0 16.854 20"><ellipse cx="8.43" cy="10.6" rx="5.35" ry="8.3" stroke="#b5cea8" stroke-width="2.9" fill="none"/><path d="M5.9 16.2L11.0 5.0" stroke="#b5cea8" stroke-width="2.5"/></svg>.<svg class="ast" width="16.854" height="20" viewBox="0 0 16.854 20"><ellipse cx="8.43" cy="10.6" rx="5.35" ry="8.3" stroke="#b5cea8" stroke-width="2.9" fill="none"/><path d="M5.9 16.2L11.0 5.0" stroke="#b5cea8" stroke-width="2.5"/></svg><svg class="ast" width="16.854" height="20" viewBox="0 0 16.854 20"><ellipse cx="8.43" cy="10.6" rx="5.35" ry="8.3" stroke="#b5cea8" stroke-width="2.9" fill="none"/><path d="M5.9 16.2L11.0 5.0" stroke="#b5cea8" stroke-width="2.5"/></svg>1</span><span style="color:#179fff">)</span> <span style="color:#d4d4d4">%</span> <span style="color:#b5cea8">1.<svg class="ast" width="16.854" height="20" viewBox="0 0 16.854 20"><ellipse cx="8.43" cy="10.6" rx="5.35" ry="8.3" stroke="#b5cea8" stroke-width="2.9" fill="none"/><path d="M5.9 16.2L11.0 5.0" stroke="#b5cea8" stroke-width="2.5"/></svg></span><span style="color:#d4d4d4">;</span></div>
<div class="ln" style="top:1426.8px">117</div><div class="cl" style="top:1426.8px">    <span style="color:#d4d4d4">shape</span><span style="color:#d4d4d4">.</span><span style="color:#d4d4d4">fill</span><span style="color:#179fff">(</span><span style="color:#d4d4d4">hsv</span><span style="color:#ffd700">(</span><span style="color:#d4d4d4">hue</span><span style="color:#d4d4d4">,</span> <span style="color:#d4d4d4">params</span><span style="color:#d4d4d4">.</span><span style="color:#d4d4d4">sat</span><span style="color:#d4d4d4">,</span> <span style="color:#b5cea8">1</span><span style="color:#ffd700">)</span><span style="color:#179fff">)</span><span style="color:#d4d4d4">;</span></div>
<div class="ln" style="top:1468.8px">118</div><div class="cl" style="top:1468.8px"></div>
<div style="position:absolute;left:91px;top:170px;width:1550px;height:6px;background:linear-gradient(#000 0%, #000 35%, rgba(0,0,0,.45) 65%, rgba(0,0,0,0) 100%)"></div>
<div class="mm" style="top:127.5px"><span style="color:#569cd6">import</span> <span style="color:#d4d4d4">{</span></div>
<div class="mm" style="top:131.5px">  <span style="color:#d4d4d4">backgroundFill</span><span style="color:#d4d4d4">,</span></div>
<div class="mm" style="top:135.5px">  <span style="color:#d4d4d4">setupColorParams</span><span style="color:#d4d4d4">,</span></div>
<div class="mm" style="top:139.5px">  <span style="color:#d4d4d4">updateColorParams</span><span style="color:#d4d4d4">,</span></div>
<div class="mm" style="top:143.5px"><span style="color:#d4d4d4">}</span> <span style="color:#569cd6">from</span> <span style="color:#ce9178">&quot;./helpers.ts&quot;</span><span style="color:#d4d4d4">;</span></div>
<div class="mm" style="top:147.5px"></div>
<div class="mm" style="top:151.5px"><span style="color:#569cd6">const</span> <span style="color:#4ec9b0">FAR_RANGE</span> <span style="color:#d4d4d4">=</span> <span style="color:#b5cea8">0.4</span><span style="color:#d4d4d4">;</span></div>
<div class="mm" style="top:155.5px"><span style="color:#569cd6">const</span> <span style="color:#4ec9b0">CLOSE_RANGE</span> <span style="color:#d4d4d4">=</span> <span style="color:#b5cea8">0.08</span><span style="color:#d4d4d4">;</span></div>
<div class="mm" style="top:159.5px"></div>
<div class="mm" style="top:163.5px"><span style="color:#569cd6">const</span> <span style="color:#d4d4d4">params</span> <span style="color:#d4d4d4">=</span> <span style="color:#d4d4d4">createParameters</span><span style="color:#d4d4d4">(</span><span style="color:#d4d4d4">{</span></div>
<div class="mm" style="top:167.5px">  <span style="color:#d4d4d4">.</span><span style="color:#d4d4d4">.</span><span style="color:#d4d4d4">.</span><span style="color:#d4d4d4">setupColorParams</span><span style="color:#d4d4d4">(</span><span style="color:#d4d4d4">)</span><span style="color:#d4d4d4">,</span></div>
<div class="mm" style="top:171.5px">  <span style="color:#d4d4d4">blur</span><span style="color:#d4d4d4">:</span> <span style="color:#d4d4d4">slider</span><span style="color:#d4d4d4">(</span><span style="color:#d4d4d4">{</span></div>
<div class="mm" style="top:175.5px">    <span style="color:#d4d4d4">default</span><span style="color:#d4d4d4">:</span> <span style="color:#b5cea8">0.5</span><span style="color:#d4d4d4">,</span></div>
<div class="mm" style="top:179.5px">    <span style="color:#d4d4d4">label</span><span style="color:#d4d4d4">:</span> <span style="color:#ce9178">&quot;Blur&quot;</span><span style="color:#d4d4d4">,</span></div>
<div class="mm" style="top:183.5px">  <span style="color:#d4d4d4">}</span><span style="color:#d4d4d4">)</span><span style="color:#d4d4d4">,</span></div>
<div class="mm" style="top:187.5px">  <span style="color:#d4d4d4">speed</span><span style="color:#d4d4d4">:</span> <span style="color:#d4d4d4">slider</span><span style="color:#d4d4d4">(</span><span style="color:#d4d4d4">{</span></div>
<div class="mm" style="top:191.5px">    <span style="color:#d4d4d4">default</span><span style="color:#d4d4d4">:</span> <span style="color:#b5cea8">0.5</span><span style="color:#d4d4d4">,</span></div>
<div class="mm" style="top:195.5px">    <span style="color:#d4d4d4">label</span><span style="color:#d4d4d4">:</span> <span style="color:#ce9178">&quot;Speed&quot;</span><span style="color:#d4d4d4">,</span></div>
<div class="mm" style="top:199.5px">  <span style="color:#d4d4d4">}</span><span style="color:#d4d4d4">)</span><span style="color:#d4d4d4">,</span></div>
<div class="mm" style="top:203.5px">  <span style="color:#d4d4d4">size</span><span style="color:#d4d4d4">:</span> <span style="color:#d4d4d4">slider</span><span style="color:#d4d4d4">(</span><span style="color:#d4d4d4">{</span></div>
<div class="mm" style="top:207.5px">    <span style="color:#d4d4d4">default</span><span style="color:#d4d4d4">:</span> <span style="color:#b5cea8">0.5</span><span style="color:#d4d4d4">,</span></div>
<div class="mm" style="top:211.5px">    <span style="color:#d4d4d4">label</span><span style="color:#d4d4d4">:</span> <span style="color:#ce9178">&quot;Size&quot;</span><span style="color:#d4d4d4">,</span></div>
<div class="mm" style="top:215.5px">  <span style="color:#d4d4d4">}</span><span style="color:#d4d4d4">)</span><span style="color:#d4d4d4">,</span></div>
<div class="mm" style="top:219.5px">  <span style="color:#d4d4d4">target_range</span><span style="color:#d4d4d4">:</span> <span style="color:#d4d4d4">slider</span><span style="color:#d4d4d4">(</span><span style="color:#d4d4d4">{</span></div>
<div class="mm" style="top:223.5px">    <span style="color:#d4d4d4">label</span><span style="color:#d4d4d4">:</span> <span style="color:#ce9178">&quot;Target Range&quot;</span><span style="color:#d4d4d4">,</span></div>
<div class="mm" style="top:227.5px">    <span style="color:#d4d4d4">default</span><span style="color:#d4d4d4">:</span> <span style="color:#4ec9b0">CLOSE_RANGE</span><span style="color:#d4d4d4">,</span></div>
<div class="mm" style="top:231.5px">    <span style="color:#d4d4d4">min</span><span style="color:#d4d4d4">:</span> <span style="color:#b5cea8">0</span><span style="color:#d4d4d4">,</span></div>
<div class="mm" style="top:235.5px">    <span style="color:#d4d4d4">max</span><span style="color:#d4d4d4">:</span> <span style="color:#b5cea8">1</span><span style="color:#d4d4d4">,</span></div>
<div class="mm" style="top:239.5px">    <span style="color:#d4d4d4">step</span><span style="color:#d4d4d4">:</span> <span style="color:#b5cea8">0.001</span><span style="color:#d4d4d4">,</span></div>
<div class="mm" style="top:243.5px">  <span style="color:#d4d4d4">}</span><span style="color:#d4d4d4">)</span><span style="color:#d4d4d4">,</span></div>
<div class="mm" style="top:247.5px">  <span style="color:#d4d4d4">shape_mode</span><span style="color:#d4d4d4">:</span> <span style="color:#d4d4d4">select</span><span style="color:#d4d4d4">(</span><span style="color:#d4d4d4">{</span></div>
<div class="mm" style="top:251.5px">    <span style="color:#d4d4d4">default</span><span style="color:#d4d4d4">:</span> <span style="color:#ce9178">&quot;circle&quot;</span><span style="color:#d4d4d4">,</span></div>
<div class="mm" style="top:255.5px">    <span style="color:#d4d4d4">items</span><span style="color:#d4d4d4">:</span> <span style="color:#d4d4d4">[</span></div>
<div class="mm" style="top:259.5px">      <span style="color:#d4d4d4">{</span> <span style="color:#d4d4d4">key</span><span style="color:#d4d4d4">:</span> <span style="color:#ce9178">&quot;circle&quot;</span><span style="color:#d4d4d4">,</span> <span style="color:#d4d4d4">label</span><span style="color:#d4d4d4">:</span> <span style="color:#ce9178">&quot;Circle&quot;</span> <span style="color:#d4d4d4">}</span><span style="color:#d4d4d4">,</span></div>
<div class="mm" style="top:263.5px">      <span style="color:#d4d4d4">{</span> <span style="color:#d4d4d4">key</span><span style="color:#d4d4d4">:</span> <span style="color:#ce9178">&quot;rect&quot;</span><span style="color:#d4d4d4">,</span> <span style="color:#d4d4d4">label</span><span style="color:#d4d4d4">:</span> <span style="color:#ce9178">&quot;Rectangle&quot;</span> <span style="color:#d4d4d4">}</span><span style="color:#d4d4d4">,</span></div>
<div class="mm" style="top:267.5px">    <span style="color:#d4d4d4">]</span><span style="color:#d4d4d4">,</span></div>
<div class="mm" style="top:271.5px">    <span style="color:#d4d4d4">label</span><span style="color:#d4d4d4">:</span> <span style="color:#ce9178">&quot;Shape Mode&quot;</span><span style="color:#d4d4d4">,</span></div>
<div class="mm" style="top:275.5px">  <span style="color:#d4d4d4">}</span><span style="color:#d4d4d4">)</span><span style="color:#d4d4d4">,</span></div>
<div class="mm" style="top:279.5px">  <span style="color:#d4d4d4">beat_mode</span><span style="color:#d4d4d4">:</span> <span style="color:#d4d4d4">toggle</span><span style="color:#d4d4d4">(</span><span style="color:#d4d4d4">{</span> <span style="color:#d4d4d4">label</span><span style="color:#d4d4d4">:</span> <span style="color:#ce9178">&quot;Beat Mode&quot;</span> <span style="color:#d4d4d4">}</span><span style="color:#d4d4d4">)</span><span style="color:#d4d4d4">,</span></div>
<div class="mm" style="top:283.5px">  <span style="color:#d4d4d4">outline_mode</span><span style="color:#d4d4d4">:</span> <span style="color:#d4d4d4">toggle</span><span style="color:#d4d4d4">(</span><span style="color:#d4d4d4">{</span> <span style="color:#d4d4d4">label</span><span style="color:#d4d4d4">:</span> <span style="color:#ce9178">&quot;Outline Mode&quot;</span> <span style="color:#d4d4d4">}</span><span style="color:#d4d4d4">)</span><span style="color:#d4d4d4">,</span></div>
<div class="mm" style="top:287.5px"><span style="color:#d4d4d4">}</span><span style="color:#d4d4d4">)</span><span style="color:#d4d4d4">;</span></div>
<div class="mm" style="top:291.5px"></div>
<div class="mm" style="top:295.5px"><span style="color:#569cd6">const</span> <span style="color:#d4d4d4">state</span> <span style="color:#d4d4d4">=</span> <span style="color:#d4d4d4">createState</span><span style="color:#d4d4d4">(</span><span style="color:#d4d4d4">{</span></div>
<div class="mm" style="top:299.5px">  <span style="color:#d4d4d4">r</span><span style="color:#d4d4d4">:</span> <span style="color:#b5cea8">0</span><span style="color:#d4d4d4">,</span> <span style="color:#6f6f6f">// TODO: remove</span></div>
<div class="mm" style="top:303.5px">  <span style="color:#d4d4d4">range</span><span style="color:#d4d4d4">:</span> <span style="color:#4ec9b0">CLOSE_RANGE</span><span style="color:#d4d4d4">,</span></div>
<div class="mm" style="top:307.5px"><span style="color:#d4d4d4">}</span><span style="color:#d4d4d4">)</span><span style="color:#d4d4d4">;</span></div>
<div class="mm" style="top:311.5px"></div>
<div class="mm" style="top:315.5px"><span style="color:#569cd6">let</span> <span style="color:#d4d4d4">draw</span> <span style="color:#d4d4d4">=</span> <span style="color:#d4d4d4">createDraw</span><span style="color:#d4d4d4">(</span><span style="color:#d4d4d4">)</span><span style="color:#d4d4d4">;</span></div>
<div class="mm" style="top:319.5px"></div>
<div class="mm" style="top:323.5px"><span style="color:#569cd6">export</span> <span style="color:#569cd6">function</span> <span style="color:#d4d4d4">update</span><span style="color:#d4d4d4">(</span><span style="color:#d4d4d4">)</span> <span style="color:#d4d4d4">{</span></div>
<div class="mm" style="top:327.5px">  <span style="color:#d4d4d4">updateColorParams</span><span style="color:#d4d4d4">(</span><span style="color:#d4d4d4">params</span><span style="color:#d4d4d4">)</span><span style="color:#d4d4d4">;</span></div>
<div class="mm" style="top:331.5px"></div>
<div class="mm" style="top:335.5px">  <span style="color:#569cd6">if</span> <span style="color:#d4d4d4">(</span><span style="color:#d4d4d4">launchpad</span><span style="color:#d4d4d4">.</span><span style="color:#d4d4d4">note</span><span style="color:#d4d4d4">(</span><span style="color:#ce9178">&quot;button_a&quot;</span><span style="color:#d4d4d4">)</span><span style="color:#d4d4d4">.</span><span style="color:#d4d4d4">on</span><span style="color:#d4d4d4">(</span><span style="color:#d4d4d4">)</span><span style="color:#d4d4d4">)</span> <span style="color:#d4d4d4">{</span></div>
<div class="mm" style="top:339.5px">    <span style="color:#6f6f6f">// TODO: why does params.target_range have floating point error?</span></div>
<div class="mm" style="top:343.5px">    <span style="color:#569cd6">if</span> <span style="color:#d4d4d4">(</span><span style="color:#4ec9b0">Math</span><span style="color:#d4d4d4">.</span><span style="color:#d4d4d4">round</span><span style="color:#d4d4d4">(</span><span style="color:#d4d4d4">params</span><span style="color:#d4d4d4">.</span><span style="color:#d4d4d4">target_range</span> <span style="color:#d4d4d4">*</span> <span style="color:#b5cea8">100</span><span style="color:#d4d4d4">)</span> <span style="color:#d4d4d4">/</span> <span style="color:#b5cea8">100</span> <span style="color:#d4d4d4">=</span><span style="color:#d4d4d4">=</span><span style="color:#d4d4d4">=</span> <span style="color:#4ec9b0">FAR_RANGE</span><span style="color:#d4d4d4">)</span> <span style="color:#d4d4d4">{</span></div>
<div class="mm" style="top:347.5px">      <span style="color:#d4d4d4">params</span><span style="color:#d4d4d4">.</span><span style="color:#d4d4d4">target_range</span> <span style="color:#d4d4d4">=</span> <span style="color:#4ec9b0">CLOSE_RANGE</span><span style="color:#d4d4d4">;</span></div>
<div class="mm" style="top:351.5px">    <span style="color:#d4d4d4">}</span> <span style="color:#569cd6">else</span> <span style="color:#d4d4d4">{</span></div>
<div class="mm" style="top:355.5px">      <span style="color:#d4d4d4">params</span><span style="color:#d4d4d4">.</span><span style="color:#d4d4d4">target_range</span> <span style="color:#d4d4d4">=</span> <span style="color:#4ec9b0">FAR_RANGE</span><span style="color:#d4d4d4">;</span></div>
<div class="mm" style="top:359.5px">    <span style="color:#d4d4d4">}</span></div>
<div class="mm" style="top:363.5px">  <span style="color:#d4d4d4">}</span></div>
<div class="mm" style="top:367.5px"></div>
<div class="mm" style="top:371.5px">  <span style="color:#d4d4d4">state</span><span style="color:#d4d4d4">.</span><span style="color:#d4d4d4">range</span> <span style="color:#d4d4d4">=</span> <span style="color:#d4d4d4">lerp</span><span style="color:#d4d4d4">(</span><span style="color:#d4d4d4">state</span><span style="color:#d4d4d4">.</span><span style="color:#d4d4d4">range</span><span style="color:#d4d4d4">,</span> <span style="color:#d4d4d4">params</span><span style="color:#d4d4d4">.</span><span style="color:#d4d4d4">target_range</span><span style="color:#d4d4d4">,</span> <span style="color:#b5cea8">0.1</span><span style="color:#d4d4d4">)</span><span style="color:#d4d4d4">;</span></div>
<div class="mm" style="top:375.5px"></div>
<div class="mm" style="top:379.5px">  <span style="color:#569cd6">if</span> <span style="color:#d4d4d4">(</span><span style="color:#d4d4d4">params</span><span style="color:#d4d4d4">.</span><span style="color:#d4d4d4">beat_mode</span> <span style="color:#d4d4d4">&amp;</span><span style="color:#d4d4d4">&amp;</span> <span style="color:#d4d4d4">tempo</span><span style="color:#d4d4d4">.</span><span style="color:#d4d4d4">onBeat</span><span style="color:#d4d4d4">(</span><span style="color:#d4d4d4">)</span><span style="color:#d4d4d4">)</span> <span style="color:#d4d4d4">{</span></div>
<div class="mm" style="top:383.5px">    <span style="color:#d4d4d4">state</span><span style="color:#d4d4d4">.</span><span style="color:#d4d4d4">r</span> <span style="color:#d4d4d4">=</span> <span style="color:#4ec9b0">Math</span><span style="color:#d4d4d4">.</span><span style="color:#d4d4d4">random</span><span style="color:#d4d4d4">(</span><span style="color:#d4d4d4">)</span> <span style="color:#d4d4d4">*</span> <span style="color:#b5cea8">1000</span><span style="color:#d4d4d4">;</span></div>
<div class="mm" style="top:387.5px">  <span style="color:#d4d4d4">}</span></div>
<div class="mm" style="top:391.5px"></div>
<div class="mm" style="top:395.5px">  <span style="color:#569cd6">if</span> <span style="color:#d4d4d4">(</span><span style="color:#d4d4d4">launchpad</span><span style="color:#d4d4d4">.</span><span style="color:#d4d4d4">note</span><span style="color:#d4d4d4">(</span><span style="color:#ce9178">&quot;button_b&quot;</span><span style="color:#d4d4d4">)</span><span style="color:#d4d4d4">.</span><span style="color:#d4d4d4">on</span><span style="color:#d4d4d4">(</span><span style="color:#d4d4d4">)</span><span style="color:#d4d4d4">)</span> <span style="color:#d4d4d4">{</span></div>
<div class="mm" style="top:399.5px">    <span style="color:#569cd6">if</span> <span style="color:#d4d4d4">(</span><span style="color:#d4d4d4">params</span><span style="color:#d4d4d4">.</span><span style="color:#d4d4d4">shape_mode</span> <span style="color:#d4d4d4">=</span><span style="color:#d4d4d4">=</span><span style="color:#d4d4d4">=</span> <span style="color:#ce9178">&quot;circle&quot;</span><span style="color:#d4d4d4">)</span> <span style="color:#d4d4d4">{</span></div>
<div class="mm" style="top:403.5px">      <span style="color:#d4d4d4">params</span><span style="color:#d4d4d4">.</span><span style="color:#d4d4d4">shape_mode</span> <span style="color:#d4d4d4">=</span> <span style="color:#ce9178">&quot;rect&quot;</span><span style="color:#d4d4d4">;</span></div>
<div class="mm" style="top:407.5px">    <span style="color:#d4d4d4">}</span> <span style="color:#569cd6">else</span> <span style="color:#d4d4d4">{</span></div>
<div class="mm" style="top:411.5px">      <span style="color:#d4d4d4">params</span><span style="color:#d4d4d4">.</span><span style="color:#d4d4d4">shape_mode</span> <span style="color:#d4d4d4">=</span> <span style="color:#ce9178">&quot;circle&quot;</span><span style="color:#d4d4d4">;</span></div>
<div class="mm" style="top:415.5px">    <span style="color:#d4d4d4">}</span></div>
<div class="mm" style="top:419.5px">  <span style="color:#d4d4d4">}</span></div>
<div class="mm" style="top:423.5px"></div>
<div class="mm" style="top:427.5px">  <span style="color:#d4d4d4">backgroundFill</span><span style="color:#d4d4d4">(</span><span style="color:#d4d4d4">draw</span><span style="color:#d4d4d4">,</span> <span style="color:#d4d4d4">params</span><span style="color:#d4d4d4">.</span><span style="color:#d4d4d4">blur</span><span style="color:#d4d4d4">)</span><span style="color:#d4d4d4">;</span></div>
<div class="mm" style="top:431.5px"></div>
<div class="mm" style="top:435.5px">  <span style="color:#d4d4d4">draw</span> <span style="color:#d4d4d4">=</span> <span style="color:#d4d4d4">draw</span><span style="color:#d4d4d4">.</span><span style="color:#d4d4d4">rotate</span><span style="color:#d4d4d4">(</span><span style="color:#d4d4d4">radians</span><span style="color:#d4d4d4">(</span><span style="color:#d4d4d4">state</span><span style="color:#d4d4d4">.</span><span style="color:#d4d4d4">r</span><span style="color:#d4d4d4">)</span><span style="color:#d4d4d4">)</span><span style="color:#d4d4d4">;</span></div>
<div class="mm" style="top:439.5px"></div>
<div class="mm" style="top:443.5px">  <span style="color:#569cd6">let</span> <span style="color:#d4d4d4">size</span> <span style="color:#d4d4d4">=</span> <span style="color:#b5cea8">70</span><span style="color:#d4d4d4">;</span></div>
<div class="mm" style="top:447.5px">  <span style="color:#d4d4d4">size</span> <span style="color:#d4d4d4">=</span> <span style="color:#b5cea8">12</span> <span style="color:#d4d4d4">+</span> <span style="color:#d4d4d4">size</span> <span style="color:#d4d4d4">*</span> <span style="color:#d4d4d4">params</span><span style="color:#d4d4d4">.</span><span style="color:#d4d4d4">size</span><span style="color:#d4d4d4">;</span></div>
<div class="mm" style="top:451.5px"></div>
<div class="mm" style="top:455.5px">  <span style="color:#6f6f6f">// TODO: use beat progress as multiplier for velocity</span></div>
<div class="mm" style="top:459.5px">  <span style="color:#d4d4d4">state</span><span style="color:#d4d4d4">.</span><span style="color:#d4d4d4">r</span> <span style="color:#d4d4d4">+</span><span style="color:#d4d4d4">=</span> <span style="color:#b5cea8">0.01</span> <span style="color:#d4d4d4">*</span> <span style="color:#d4d4d4">-</span><span style="color:#d4d4d4">params</span><span style="color:#d4d4d4">.</span><span style="color:#d4d4d4">speed</span> <span style="color:#d4d4d4">*</span> <span style="color:#d4d4d4">delta</span><span style="color:#d4d4d4">(</span><span style="color:#d4d4d4">)</span><span style="color:#d4d4d4">;</span></div>
<div class="mm" style="top:463.5px"></div>
<div class="mm" style="top:467.5px">  <span style="color:#569cd6">const</span> <span style="color:#d4d4d4">offset</span> <span style="color:#d4d4d4">=</span> <span style="color:#b5cea8">100</span> <span style="color:#d4d4d4">*</span> <span style="color:#4ec9b0">Math</span><span style="color:#d4d4d4">.</span><span style="color:#d4d4d4">sin</span><span style="color:#d4d4d4">(</span><span style="color:#d4d4d4">time</span><span style="color:#d4d4d4">(</span><span style="color:#d4d4d4">)</span> <span style="color:#d4d4d4">*</span> <span style="color:#b5cea8">0.1</span> <span style="color:#d4d4d4">*</span> <span style="color:#b5cea8">0.2</span><span style="color:#d4d4d4">)</span><span style="color:#d4d4d4">;</span></div>
<div class="mm" style="top:471.5px"></div>
<div class="mm" style="top:475.5px">  <span style="color:#569cd6">const</span> <span style="color:#d4d4d4">range</span> <span style="color:#d4d4d4">=</span> <span style="color:#d4d4d4">state</span><span style="color:#d4d4d4">.</span><span style="color:#d4d4d4">range</span> <span style="color:#d4d4d4">*</span> <span style="color:#b5cea8">20</span> <span style="color:#d4d4d4">+</span> <span style="color:#b5cea8">1</span><span style="color:#d4d4d4">;</span></div>
<div class="mm" style="top:479.5px"></div>
<div class="mm" style="top:483.5px">  <span style="color:#569cd6">for</span> <span style="color:#d4d4d4">(</span><span style="color:#569cd6">let</span> <span style="color:#d4d4d4">i</span> <span style="color:#d4d4d4">=</span> <span style="color:#b5cea8">0</span><span style="color:#d4d4d4">;</span> <span style="color:#d4d4d4">i</span> <span style="color:#d4d4d4">&lt;</span> <span style="color:#b5cea8">200</span><span style="color:#d4d4d4">;</span> <span style="color:#d4d4d4">i</span><span style="color:#d4d4d4">+</span><span style="color:#d4d4d4">+</span><span style="color:#d4d4d4">)</span> <span style="color:#d4d4d4">{</span></div>
<div class="mm" style="top:487.5px">    <span style="color:#569cd6">const</span> <span style="color:#d4d4d4">isPulsing</span> <span style="color:#d4d4d4">=</span> <span style="color:#d4d4d4">params</span><span style="color:#d4d4d4">.</span><span style="color:#d4d4d4">beat_mode</span> <span style="color:#d4d4d4">&amp;</span><span style="color:#d4d4d4">&amp;</span> <span style="color:#d4d4d4">tempo</span><span style="color:#d4d4d4">.</span><span style="color:#d4d4d4">beatIndex</span><span style="color:#d4d4d4">(</span><span style="color:#d4d4d4">)</span> <span style="color:#d4d4d4">%</span> <span style="color:#b5cea8">2</span> <span style="color:#d4d4d4">=</span><span style="color:#d4d4d4">=</span> <span style="color:#d4d4d4">i</span> <span style="color:#d4d4d4">%</span> <span style="color:#b5cea8">2</span><span style="color:#d4d4d4">;</span></div>
<div class="mm" style="top:491.5px"></div>
<div class="mm" style="top:495.5px">    <span style="color:#569cd6">let</span> <span style="color:#d4d4d4">drawShape</span> <span style="color:#d4d4d4">=</span> <span style="color:#d4d4d4">draw</span><span style="color:#d4d4d4">.</span><span style="color:#d4d4d4">translate</span><span style="color:#d4d4d4">(</span><span style="color:#b5cea8">0</span><span style="color:#d4d4d4">,</span> <span style="color:#d4d4d4">offset</span> <span style="color:#d4d4d4">+</span> <span style="color:#d4d4d4">range</span> <span style="color:#d4d4d4">*</span> <span style="color:#d4d4d4">i</span><span style="color:#d4d4d4">)</span><span style="color:#d4d4d4">;</span></div>
<div class="mm" style="top:499.5px"></div>
<div class="mm" style="top:503.5px">    <span style="color:#569cd6">let</span> <span style="color:#d4d4d4">size_i</span> <span style="color:#d4d4d4">=</span> <span style="color:#4ec9b0">Math</span><span style="color:#d4d4d4">.</span><span style="color:#d4d4d4">abs</span><span style="color:#d4d4d4">(</span><span style="color:#4ec9b0">Math</span><span style="color:#d4d4d4">.</span><span style="color:#d4d4d4">sin</span><span style="color:#d4d4d4">(</span><span style="color:#d4d4d4">i</span> <span style="color:#d4d4d4">*</span> <span style="color:#b5cea8">0.035</span> <span style="color:#d4d4d4">+</span> <span style="color:#d4d4d4">time</span><span style="color:#d4d4d4">(</span><span style="color:#d4d4d4">)</span> <span style="color:#d4d4d4">*</span> <span style="color:#b5cea8">0.05</span><span style="color:#d4d4d4">)</span> <span style="color:#d4d4d4">*</span> <span style="color:#d4d4d4">size</span><span style="color:#d4d4d4">)</span> <span style="color:#d4d4d4">+</span> <span style="color:#b5cea8">10</span><span style="color:#d4d4d4">;</span></div>
<div class="mm" style="top:507.5px">    <span style="color:#569cd6">if</span> <span style="color:#d4d4d4">(</span><span style="color:#d4d4d4">isPulsing</span><span style="color:#d4d4d4">)</span> <span style="color:#d4d4d4">{</span></div>
<div class="mm" style="top:511.5px">      <span style="color:#d4d4d4">size_i</span> <span style="color:#d4d4d4">=</span> <span style="color:#d4d4d4">lerp</span><span style="color:#d4d4d4">(</span><span style="color:#d4d4d4">size_i</span><span style="color:#d4d4d4">,</span> <span style="color:#d4d4d4">size_i</span> <span style="color:#d4d4d4">*</span> <span style="color:#d4d4d4">tempo</span><span style="color:#d4d4d4">.</span><span style="color:#d4d4d4">invBeatProgress</span><span style="color:#d4d4d4">(</span><span style="color:#d4d4d4">)</span> <span style="color:#d4d4d4">*</span> <span style="color:#d4d4d4">size</span> <span style="color:#d4d4d4">*</span> <span style="color:#b5cea8">2</span><span style="color:#d4d4d4">,</span> <span style="color:#d4d4d4">size</span><span style="color:#d4d4d4">)</span><span style="color:#d4d4d4">;</span></div>
<div class="mm" style="top:515.5px">    <span style="color:#d4d4d4">}</span></div>
<div class="mm" style="top:519.5px"></div>
<div class="mm" style="top:523.5px">    <span style="color:#569cd6">let</span> <span style="color:#d4d4d4">shape</span><span style="color:#d4d4d4">:</span> <span style="color:#4ec9b0">Ellipse</span> <span style="color:#d4d4d4">|</span> <span style="color:#4ec9b0">Rect</span><span style="color:#d4d4d4">;</span></div>
<div class="mm" style="top:527.5px"></div>
<div class="mm" style="top:531.5px">    <span style="color:#569cd6">if</span> <span style="color:#d4d4d4">(</span><span style="color:#d4d4d4">params</span><span style="color:#d4d4d4">.</span><span style="color:#d4d4d4">shape_mode</span> <span style="color:#d4d4d4">=</span><span style="color:#d4d4d4">=</span><span style="color:#d4d4d4">=</span> <span style="color:#ce9178">&quot;rect&quot;</span><span style="color:#d4d4d4">)</span> <span style="color:#d4d4d4">{</span></div>
<div class="mm" style="top:535.5px">      <span style="color:#d4d4d4">drawShape</span> <span style="color:#d4d4d4">=</span> <span style="color:#d4d4d4">drawShape</span><span style="color:#d4d4d4">.</span><span style="color:#d4d4d4">rotate</span><span style="color:#d4d4d4">(</span><span style="color:#d4d4d4">radians</span><span style="color:#d4d4d4">(</span><span style="color:#d4d4d4">state</span><span style="color:#d4d4d4">.</span><span style="color:#d4d4d4">r</span> <span style="color:#d4d4d4">*</span> <span style="color:#b5cea8">0.5</span><span style="color:#d4d4d4">)</span><span style="color:#d4d4d4">)</span><span style="color:#d4d4d4">;</span></div>
<div class="mm" style="top:539.5px">      <span style="color:#d4d4d4">shape</span> <span style="color:#d4d4d4">=</span> <span style="color:#d4d4d4">drawShape</span><span style="color:#d4d4d4">.</span><span style="color:#d4d4d4">rect</span><span style="color:#d4d4d4">(</span><span style="color:#d4d4d4">)</span><span style="color:#d4d4d4">.</span><span style="color:#d4d4d4">wh</span><span style="color:#d4d4d4">(</span><span style="color:#d4d4d4">size_i</span> <span style="color:#d4d4d4">*</span> <span style="color:#b5cea8">4</span><span style="color:#d4d4d4">,</span> <span style="color:#d4d4d4">size_i</span> <span style="color:#d4d4d4">*</span> <span style="color:#b5cea8">0.25</span><span style="color:#d4d4d4">)</span><span style="color:#d4d4d4">;</span></div>
<div class="mm" style="top:543.5px">    <span style="color:#d4d4d4">}</span> <span style="color:#569cd6">else</span> <span style="color:#d4d4d4">{</span></div>
<div class="mm" style="top:547.5px">      <span style="color:#d4d4d4">shape</span> <span style="color:#d4d4d4">=</span> <span style="color:#d4d4d4">drawShape</span><span style="color:#d4d4d4">.</span><span style="color:#d4d4d4">ellipse</span><span style="color:#d4d4d4">(</span><span style="color:#d4d4d4">)</span><span style="color:#d4d4d4">.</span><span style="color:#d4d4d4">wh</span><span style="color:#d4d4d4">(</span><span style="color:#d4d4d4">size_i</span><span style="color:#d4d4d4">,</span> <span style="color:#d4d4d4">size_i</span><span style="color:#d4d4d4">)</span><span style="color:#d4d4d4">;</span></div>
<div class="mm" style="top:551.5px">    <span style="color:#d4d4d4">}</span></div>
<div class="mm" style="top:555.5px"></div>
<div class="mm" style="top:559.5px">    <span style="color:#569cd6">if</span> <span style="color:#d4d4d4">(</span><span style="color:#d4d4d4">params</span><span style="color:#d4d4d4">.</span><span style="color:#d4d4d4">outline_mode</span><span style="color:#d4d4d4">)</span> <span style="color:#d4d4d4">{</span></div>
<div class="mm" style="top:563.5px">      <span style="color:#d4d4d4">shape</span> <span style="color:#d4d4d4">=</span> <span style="color:#d4d4d4">shape</span><span style="color:#d4d4d4">.</span><span style="color:#d4d4d4">xyz</span><span style="color:#d4d4d4">(</span><span style="color:#b5cea8">0</span><span style="color:#d4d4d4">,</span> <span style="color:#b5cea8">0</span><span style="color:#d4d4d4">,</span> <span style="color:#d4d4d4">i</span> <span style="color:#d4d4d4">*</span> <span style="color:#d4d4d4">-</span><span style="color:#b5cea8">0.01</span><span style="color:#d4d4d4">)</span><span style="color:#d4d4d4">;</span></div>
<div class="mm" style="top:567.5px">      <span style="color:#d4d4d4">shape</span> <span style="color:#d4d4d4">=</span> <span style="color:#d4d4d4">shape</span><span style="color:#d4d4d4">.</span><span style="color:#d4d4d4">strokeWeight</span><span style="color:#d4d4d4">(</span><span style="color:#b5cea8">4</span><span style="color:#d4d4d4">)</span><span style="color:#d4d4d4">;</span></div>
<div class="mm" style="top:571.5px">    <span style="color:#d4d4d4">}</span> <span style="color:#569cd6">else</span> <span style="color:#d4d4d4">{</span></div>
<div class="mm" style="top:575.5px">      <span style="color:#d4d4d4">shape</span> <span style="color:#d4d4d4">=</span> <span style="color:#d4d4d4">shape</span><span style="color:#d4d4d4">.</span><span style="color:#d4d4d4">xyz</span><span style="color:#d4d4d4">(</span><span style="color:#b5cea8">0</span><span style="color:#d4d4d4">,</span> <span style="color:#b5cea8">0</span><span style="color:#d4d4d4">,</span> <span style="color:#d4d4d4">i</span> <span style="color:#d4d4d4">*</span> <span style="color:#b5cea8">0.01</span><span style="color:#d4d4d4">)</span><span style="color:#d4d4d4">;</span></div>
<div class="mm" style="top:579.5px">    <span style="color:#d4d4d4">}</span></div>
<div class="mm" style="top:583.5px"></div>
<div class="mm" style="top:587.5px">    <span style="color:#569cd6">const</span> <span style="color:#d4d4d4">hue</span> <span style="color:#d4d4d4">=</span> <span style="color:#d4d4d4">(</span><span style="color:#d4d4d4">params</span><span style="color:#d4d4d4">.</span><span style="color:#d4d4d4">hue</span> <span style="color:#d4d4d4">+</span> <span style="color:#d4d4d4">i</span> <span style="color:#d4d4d4">*</span> <span style="color:#b5cea8">0.001</span><span style="color:#d4d4d4">)</span> <span style="color:#d4d4d4">%</span> <span style="color:#b5cea8">1.0</span><span style="color:#d4d4d4">;</span></div>
<div class="mm" style="top:591.5px">    <span style="color:#d4d4d4">shape</span><span style="color:#d4d4d4">.</span><span style="color:#d4d4d4">fill</span><span style="color:#d4d4d4">(</span><span style="color:#d4d4d4">hsv</span><span style="color:#d4d4d4">(</span><span style="color:#d4d4d4">hue</span><span style="color:#d4d4d4">,</span> <span style="color:#d4d4d4">params</span><span style="color:#d4d4d4">.</span><span style="color:#d4d4d4">sat</span><span style="color:#d4d4d4">,</span> <span style="color:#b5cea8">1</span><span style="color:#d4d4d4">)</span><span style="color:#d4d4d4">)</span><span style="color:#d4d4d4">;</span></div>
<div class="mm" style="top:595.5px"></div>
<div class="mm" style="top:599.5px">    <span style="color:#d4d4d4">draw</span> <span style="color:#d4d4d4">=</span> <span style="color:#d4d4d4">draw</span><span style="color:#d4d4d4">.</span><span style="color:#d4d4d4">rotate</span><span style="color:#d4d4d4">(</span><span style="color:#d4d4d4">radians</span><span style="color:#d4d4d4">(</span><span style="color:#d4d4d4">state</span><span style="color:#d4d4d4">.</span><span style="color:#d4d4d4">r</span><span style="color:#d4d4d4">)</span><span style="color:#d4d4d4">)</span><span style="color:#d4d4d4">;</span></div>
<div class="mm" style="top:603.5px">  <span style="color:#d4d4d4">}</span></div>
<div class="mm" style="top:607.5px"><span style="color:#d4d4d4">}</span></div>
<div class="mm" style="top:611.5px"></div>
<div style="position:absolute;left:1648px;top:336px;width:177px;height:4px;background:rgba(80,80,80,.8)"></div>
<div style="position:absolute;left:1660px;top:336px;width:18.5px;height:4px;background:#6a6a6a"></div>
<div style="position:absolute;left:1660px;top:396.5px;width:18.5px;height:4px;background:#5a5a5a"></div>
<div style="position:absolute;left:1825px;top:128px;width:1px;height:1369px;background:#3a3a3a"></div>
<div style="position:absolute;left:1826px;top:129px;width:27px;height:1369px;background:#2a2a2a"></div>
<div style="position:absolute;left:1850px;top:129px;width:3px;height:1467px;background:#262626"></div>
<div style="position:absolute;left:1826px;top:888px;width:27px;height:290px;background:#4a4a4a"></div>
<div style="position:absolute;left:1826px;top:589px;width:13px;height:12px;background:#8a8a8a"></div>
<div style="position:absolute;left:1826px;top:723px;width:27px;height:4px;background:#8a8a8a"></div>
<div style="position:absolute;left:1826px;top:723px;width:13px;height:12px;background:#8a8a8a"></div>
<div style="position:absolute;left:87px;top:1594px;width:1766px;height:2px;background:#555"></div>
<div style="position:absolute;left:1476px;top:1514px;width:361px;height:64px;border-radius:7px;overflow:hidden;box-shadow:0 3px 6px rgba(0,0,0,.55)">
 <div style="position:absolute;left:0;top:0;width:153px;height:64px;background:#4b4b4b;border-top:1.5px solid #6e6e6e"></div>
 <div style="position:absolute;left:153px;top:0;width:140px;height:64px;background:#6b6b6b;border-top:1.5px solid #bdbdbd"></div>
 <div style="position:absolute;left:293px;top:0;width:3px;height:64px;background:#5c5c5c;border-top:1.5px solid #9a9a9a"></div>
 <div style="position:absolute;left:296px;top:0;width:65px;height:64px;background:#6b6b6b;border-top:1.5px solid #bdbdbd"></div>
</div>
<svg style="position:absolute;left:1499px;top:1533px" width="26" height="26" viewBox="0 0 26 26"><path d="M2.5 0.5 H19 L25.5 7 V23 Q25.5 25.5 23 25.5 H3 Q0.5 25.5 0.5 23 V3 Q0.5 0.5 3 0.5 Z" fill="#888"/><rect x="4.5" y="4" width="14" height="6" rx="1" fill="#4b4b4b"/><circle cx="13" cy="17.5" r="3.6" fill="#4b4b4b"/></svg>
<div style="position:absolute;left:1539px;top:1532.37px;font-size:28.5px;line-height:28.5px;color:#8c8c8c;font-weight:normal;white-space:nowrap;-webkit-text-stroke:0.6px #8c8c8c;">Save</div>
<svg style="position:absolute;left:1655px;top:1533px" width="24" height="26" viewBox="0 0 24 26"><path d="M2.5 1.5 Q0.8 0.6 0.8 2.6 V23.4 Q0.8 25.4 2.5 24.5 L21.5 14.3 Q23 13 21.5 11.7 Z" fill="#fff"/></svg>
<div style="position:absolute;left:1691.5px;top:1532.37px;font-size:28.5px;line-height:28.5px;color:#ffffff;font-weight:normal;white-space:nowrap;-webkit-text-stroke:0.6px #ffffff;">Run</div>
<svg style="position:absolute;left:1795px;top:1542px" width="19" height="12" viewBox="0 0 19 12"><path d="M1 1 H18 L9.5 11 Z" fill="#fff" stroke="#fff" stroke-width="1" stroke-linejoin="round"/></svg>
<div style="position:absolute;left:1853px;top:56px;width:707px;height:1540px;background:#363636"></div>
<div style="position:absolute;left:1885px;top:81.74px;font-size:30.2px;line-height:30.2px;color:#ffffff;font-weight:normal;white-space:nowrap;-webkit-text-stroke:0.5px #ffffff;">whirlpool.ts</div>
<div style="position:absolute;left:2503.5px;top:93px;width:6px;height:6px;border-radius:50%;background:#bbb"></div><div style="position:absolute;left:2512px;top:93px;width:6px;height:6px;border-radius:50%;background:#bbb"></div><div style="position:absolute;left:2521px;top:93px;width:6px;height:6px;border-radius:50%;background:#bbb"></div>
<svg width="648" height="362" viewBox="0 0 648 362" style="position:absolute;left:1883px;top:128px;display:block">
<rect width="648" height="362" fill="#000"/>
<circle cx="304.8" cy="97.7" r="3.38" fill="#001519"/>
<circle cx="336.5" cy="94.9" r="3.62" fill="#001519"/>
<circle cx="367.5" cy="103.8" r="3.85" fill="#001519"/>
<circle cx="393.9" cy="123.6" r="4.09" fill="#001419"/>
<circle cx="411.6" cy="152.0" r="4.31" fill="#001419"/>
<circle cx="418.2" cy="185.5" r="4.54" fill="#001419"/>
<circle cx="412.2" cy="219.7" r="4.76" fill="#001419"/>
<circle cx="394.1" cy="250.1" r="4.98" fill="#001419"/>
<circle cx="365.8" cy="272.2" r="5.19" fill="#001419"/>
<circle cx="330.9" cy="283.0" r="5.40" fill="#001419"/>
<circle cx="293.8" cy="280.5" r="5.61" fill="#001419"/>
<circle cx="259.6" cy="264.7" r="5.81" fill="#001419"/>
<circle cx="232.9" cy="237.2" r="6.00" fill="#001419"/>
<circle cx="232.5" cy="236.6" r="6.00" fill="#002b38"/>
<circle cx="217.5" cy="201.4" r="6.19" fill="#001419"/>
<circle cx="217.4" cy="200.7" r="6.19" fill="#002b38"/>
<circle cx="215.9" cy="162.0" r="6.37" fill="#001319"/>
<circle cx="216.1" cy="161.2" r="6.37" fill="#002b38"/>
<circle cx="228.8" cy="123.9" r="6.55" fill="#001319"/>
<circle cx="229.2" cy="123.2" r="6.55" fill="#002b38"/>
<circle cx="254.8" cy="92.6" r="6.73" fill="#001319"/>
<circle cx="255.5" cy="92.1" r="6.73" fill="#002a38"/>
<circle cx="290.8" cy="72.3" r="6.89" fill="#001319"/>
<circle cx="291.7" cy="72.1" r="6.89" fill="#002a38"/>
<circle cx="332.3" cy="66.2" r="7.05" fill="#001319"/>
<circle cx="333.2" cy="66.3" r="7.05" fill="#002a38"/>
<circle cx="373.8" cy="75.5" r="7.20" fill="#001319"/>
<circle cx="374.6" cy="75.9" r="7.20" fill="#002a38"/>
<circle cx="409.7" cy="99.3" r="7.35" fill="#001319"/>
<circle cx="410.4" cy="100.0" r="7.35" fill="#002a38"/>
<circle cx="435.1" cy="134.9" r="7.49" fill="#001319"/>
<circle cx="435.5" cy="135.8" r="7.49" fill="#002938"/>
<circle cx="446.2" cy="177.8" r="7.62" fill="#001319"/>
<circle cx="446.3" cy="178.8" r="7.62" fill="#002938"/>
<circle cx="441.2" cy="222.4" r="7.75" fill="#001319"/>
<circle cx="440.9" cy="223.4" r="7.75" fill="#002938"/>
<circle cx="420.3" cy="262.8" r="7.87" fill="#001219"/>
<circle cx="419.6" cy="263.6" r="7.87" fill="#002938"/>
<circle cx="385.8" cy="293.5" r="7.98" fill="#001219"/>
<circle cx="384.9" cy="294.0" r="7.98" fill="#002838"/>
<circle cx="342.1" cy="310.0" r="8.08" fill="#001219"/>
<circle cx="341.0" cy="310.1" r="8.08" fill="#002838"/>
<circle cx="294.8" cy="309.8" r="8.17" fill="#001219"/>
<circle cx="293.7" cy="309.5" r="8.17" fill="#002838"/>
<circle cx="250.1" cy="292.4" r="8.26" fill="#001219"/>
<circle cx="249.2" cy="291.7" r="8.26" fill="#002838"/>
<circle cx="214.2" cy="259.8" r="8.34" fill="#001219"/>
<circle cx="213.5" cy="258.8" r="8.34" fill="#002838"/>
<circle cx="192.0" cy="216.0" r="8.41" fill="#001219"/>
<circle cx="191.7" cy="214.8" r="8.41" fill="#002738"/>
<circle cx="186.9" cy="166.6" r="8.47" fill="#001219"/>
<circle cx="187.1" cy="165.3" r="8.47" fill="#002738"/>
<circle cx="200.0" cy="118.0" r="8.53" fill="#001219"/>
<circle cx="200.6" cy="116.8" r="8.53" fill="#002738"/>
<circle cx="229.9" cy="76.8" r="8.57" fill="#001219"/>
<circle cx="230.9" cy="75.9" r="8.57" fill="#002738"/>
<circle cx="273.1" cy="48.7" r="8.61" fill="#001119"/>
<circle cx="274.4" cy="48.3" r="8.61" fill="#002638"/>
<circle cx="324.1" cy="37.8" r="8.64" fill="#001119"/>
<circle cx="325.5" cy="37.8" r="8.64" fill="#002638"/>
<circle cx="376.1" cy="46.0" r="8.66" fill="#001119"/>
<circle cx="377.5" cy="46.5" r="8.66" fill="#002638"/>
<circle cx="422.4" cy="72.5" r="8.67" fill="#001119"/>
<circle cx="423.5" cy="73.5" r="8.67" fill="#002638"/>
<circle cx="456.4" cy="114.3" r="8.67" fill="#001119"/>
<circle cx="457.1" cy="115.6" r="8.67" fill="#002538"/>
<circle cx="473.5" cy="166.0" r="8.67" fill="#001119"/>
<circle cx="473.7" cy="167.6" r="8.67" fill="#002538"/>
<circle cx="473.8" cy="169.1" r="8.67" fill="#00476b"/>
<circle cx="470.9" cy="221.1" r="8.65" fill="#001119"/>
<circle cx="470.5" cy="222.6" r="8.65" fill="#002538"/>
<circle cx="470.1" cy="224.1" r="8.65" fill="#00466b"/>
<circle cx="448.6" cy="272.1" r="8.63" fill="#001119"/>
<circle cx="447.6" cy="273.4" r="8.63" fill="#002538"/>
<circle cx="446.7" cy="274.7" r="8.63" fill="#00466b"/>
<circle cx="409.0" cy="312.2" r="8.60" fill="#001019"/>
<circle cx="407.7" cy="313.1" r="8.60" fill="#002438"/>
<circle cx="406.3" cy="313.9" r="8.60" fill="#00456b"/>
<circle cx="357.2" cy="335.7" r="8.56" fill="#001019"/>
<circle cx="355.6" cy="336.1" r="8.56" fill="#002438"/>
<circle cx="354.0" cy="336.4" r="8.56" fill="#00456b"/>
<circle cx="299.8" cy="339.2" r="8.51" fill="#001019"/>
<circle cx="298.2" cy="339.0" r="8.51" fill="#002438"/>
<circle cx="296.5" cy="338.7" r="8.51" fill="#00446b"/>
<circle cx="244.4" cy="321.8" r="8.46" fill="#001019"/>
<circle cx="242.9" cy="320.9" r="8.46" fill="#002338"/>
<circle cx="241.4" cy="320.1" r="8.46" fill="#00446b"/>
<circle cx="198.4" cy="285.3" r="8.39" fill="#001019"/>
<circle cx="197.3" cy="283.9" r="8.39" fill="#002338"/>
<circle cx="196.2" cy="282.6" r="8.39" fill="#00436b"/>
<circle cx="168.2" cy="234.3" r="8.32" fill="#001019"/>
<circle cx="167.6" cy="232.6" r="8.32" fill="#002338"/>
<circle cx="167.1" cy="230.9" r="8.32" fill="#00436b"/>
<circle cx="158.1" cy="175.2" r="8.24" fill="#001019"/>
<circle cx="158.2" cy="173.4" r="8.24" fill="#002338"/>
<circle cx="158.3" cy="171.6" r="8.24" fill="#00426b"/>
<circle cx="169.9" cy="115.9" r="8.15" fill="#001019"/>
<circle cx="170.7" cy="114.2" r="8.15" fill="#002238"/>
<circle cx="171.5" cy="112.5" r="8.15" fill="#00426b"/>
<circle cx="202.5" cy="64.2" r="8.05" fill="#001019"/>
<circle cx="203.9" cy="62.9" r="8.05" fill="#002238"/>
<circle cx="205.2" cy="61.5" r="8.05" fill="#00416b"/>
<circle cx="251.9" cy="27.2" r="7.95" fill="#000f19"/>
<circle cx="253.7" cy="26.4" r="7.95" fill="#002238"/>
<circle cx="255.5" cy="25.6" r="7.95" fill="#00416b"/>
<circle cx="311.8" cy="10.2" r="7.84" fill="#000f19"/>
<circle cx="313.8" cy="10.1" r="7.84" fill="#002238"/>
<circle cx="315.8" cy="10.0" r="7.84" fill="#00406b"/>
<circle cx="374.5" cy="15.7" r="7.72" fill="#000f19"/>
<circle cx="376.4" cy="16.3" r="7.72" fill="#002138"/>
<circle cx="378.3" cy="17.0" r="7.72" fill="#003f6b"/>
<circle cx="431.5" cy="43.6" r="7.59" fill="#000f19"/>
<circle cx="433.2" cy="44.9" r="7.59" fill="#002138"/>
<circle cx="434.8" cy="46.2" r="7.59" fill="#003f6b"/>
<circle cx="475.3" cy="90.4" r="7.46" fill="#000f19"/>
<circle cx="476.3" cy="92.2" r="7.46" fill="#002138"/>
<circle cx="477.4" cy="94.1" r="7.46" fill="#003e6b"/>
<circle cx="499.6" cy="150.4" r="7.31" fill="#000f19"/>
<circle cx="500.0" cy="152.5" r="7.31" fill="#002038"/>
<circle cx="500.3" cy="154.6" r="7.31" fill="#003e6b"/>
<circle cx="500.9" cy="215.7" r="7.17" fill="#000f19"/>
<circle cx="500.5" cy="217.8" r="7.17" fill="#002038"/>
<circle cx="500.0" cy="219.9" r="7.17" fill="#003d6b"/>
<circle cx="478.6" cy="277.7" r="7.01" fill="#000e19"/>
<circle cx="477.4" cy="279.5" r="7.01" fill="#002038"/>
<circle cx="476.2" cy="281.4" r="7.01" fill="#003d6b"/>
<circle cx="435.2" cy="328.0" r="6.85" fill="#000e19"/>
<circle cx="433.4" cy="329.4" r="6.85" fill="#001f38"/>
<circle cx="431.5" cy="330.7" r="6.85" fill="#003c6b"/>
<circle cx="376.1" cy="359.8" r="6.68" fill="#000e19"/>
<circle cx="373.9" cy="360.5" r="6.68" fill="#001f38"/>
<circle cx="371.7" cy="361.1" r="6.68" fill="#003b6b"/>
<circle cx="309.0" cy="368.5" r="6.51" fill="#000e19"/>
<circle cx="306.6" cy="368.3" r="6.51" fill="#001f38"/>
<circle cx="304.3" cy="368.1" r="6.51" fill="#003b6b"/>
<circle cx="242.6" cy="352.4" r="6.33" fill="#000e19"/>
<circle cx="240.4" cy="351.4" r="6.33" fill="#001e38"/>
<circle cx="238.3" cy="350.3" r="6.33" fill="#003a6b"/>
<circle cx="185.8" cy="313.4" r="6.14" fill="#000e19"/>
<circle cx="184.2" cy="311.6" r="6.14" fill="#001e38"/>
<circle cx="182.5" cy="309.8" r="6.14" fill="#003a6b"/>
<circle cx="146.5" cy="256.1" r="5.95" fill="#000e19"/>
<circle cx="145.5" cy="253.8" r="5.95" fill="#001e38"/>
<circle cx="144.6" cy="251.5" r="5.95" fill="#00396b"/>
<circle cx="130.0" cy="188.0" r="5.75" fill="#000d19"/>
<circle cx="130.0" cy="185.5" r="5.75" fill="#001d38"/>
<circle cx="129.9" cy="183.0" r="5.75" fill="#00386b"/>
<circle cx="139.1" cy="117.9" r="5.55" fill="#000d19"/>
<circle cx="140.0" cy="115.5" r="5.55" fill="#001d38"/>
<circle cx="140.8" cy="113.1" r="5.55" fill="#00386b"/>
<circle cx="172.9" cy="55.1" r="5.35" fill="#000d19"/>
<circle cx="174.6" cy="53.1" r="5.35" fill="#001d38"/>
<circle cx="176.3" cy="51.2" r="5.35" fill="#00376b"/>
<circle cx="227.4" cy="8.2" r="5.14" fill="#000d19"/>
<circle cx="229.7" cy="7.0" r="5.14" fill="#001c38"/>
<circle cx="232.1" cy="5.7" r="5.14" fill="#00366b"/>
<circle cx="295.6" cy="-16.3" r="4.92" fill="#000d19"/>
<circle cx="298.3" cy="-16.7" r="4.92" fill="#001c38"/>
<circle cx="301.0" cy="-17.0" r="4.92" fill="#00366b"/>
<circle cx="368.7" cy="-14.8" r="4.70" fill="#000d19"/>
<circle cx="371.4" cy="-14.2" r="4.70" fill="#001c38"/>
<circle cx="374.0" cy="-13.5" r="4.70" fill="#00356b"/>
<circle cx="437.0" cy="12.9" r="4.48" fill="#000c19"/>
<circle cx="439.3" cy="14.5" r="4.48" fill="#001b38"/>
<circle cx="441.5" cy="16.1" r="4.48" fill="#00346b"/>
<circle cx="491.2" cy="63.6" r="4.25" fill="#000c19"/>
<circle cx="492.9" cy="65.9" r="4.25" fill="#001b38"/>
<circle cx="494.4" cy="68.3" r="4.25" fill="#00336b"/>
<circle cx="524.1" cy="130.9" r="4.03" fill="#000c19"/>
<circle cx="524.8" cy="133.7" r="4.03" fill="#001b38"/>
<circle cx="525.4" cy="136.5" r="4.03" fill="#00336b"/>
<circle cx="530.7" cy="206.1" r="3.79" fill="#000c19"/>
<circle cx="530.4" cy="209.0" r="3.79" fill="#001a38"/>
<circle cx="530.0" cy="211.9" r="3.79" fill="#00326b"/>
<circle cx="509.9" cy="279.3" r="3.56" fill="#000c19"/>
<circle cx="508.5" cy="281.9" r="3.56" fill="#001a38"/>
<circle cx="507.1" cy="284.5" r="3.56" fill="#00316b"/>
<circle cx="463.9" cy="340.7" r="3.32" fill="#000c19"/>
<circle cx="461.6" cy="342.7" r="3.32" fill="#001938"/>
<circle cx="459.4" cy="344.6" r="3.32" fill="#00306b"/>
<circle cx="398.5" cy="381.9" r="3.08" fill="#000b19"/>
<circle cx="395.7" cy="382.9" r="3.08" fill="#001938"/>
<circle cx="392.8" cy="383.9" r="3.08" fill="#00306b"/>
<circle cx="322.2" cy="397.1" r="2.84" fill="#000b19"/>
<circle cx="319.1" cy="397.1" r="2.84" fill="#001838"/>
<circle cx="316.0" cy="397.0" r="2.84" fill="#002f6b"/>
<circle cx="244.8" cy="383.9" r="2.60" fill="#000b19"/>
<circle cx="241.9" cy="382.8" r="2.60" fill="#001838"/>
<circle cx="239.0" cy="381.6" r="2.60" fill="#002e6b"/>
<circle cx="176.7" cy="343.7" r="2.36" fill="#000b19"/>
<circle cx="174.4" cy="341.5" r="2.36" fill="#001838"/>
<circle cx="172.1" cy="339.3" r="2.36" fill="#002d6b"/>
<circle cx="127.2" cy="281.3" r="2.11" fill="#000b19"/>
<circle cx="125.7" cy="278.4" r="2.11" fill="#001738"/>
<circle cx="124.3" cy="275.4" r="2.11" fill="#002c6b"/>
<circle cx="103.0" cy="204.7" r="1.87" fill="#000a19"/>
<circle cx="102.7" cy="201.4" r="1.87" fill="#001738"/>
<circle cx="102.5" cy="198.1" r="1.87" fill="#002b6b"/>
<circle cx="107.9" cy="124.0" r="1.75" fill="#000a19"/>
<circle cx="108.8" cy="120.7" r="1.75" fill="#001638"/>
<circle cx="109.7" cy="117.5" r="1.75" fill="#002a6b"/>
<circle cx="141.5" cy="49.7" r="1.99" fill="#000a19"/>
<circle cx="143.6" cy="47.0" r="1.99" fill="#001638"/>
<circle cx="145.6" cy="44.3" r="1.99" fill="#00296b"/>
<circle cx="199.9" cy="-8.0" r="2.24" fill="#000a19"/>
<circle cx="202.8" cy="-9.8" r="2.24" fill="#001538"/>
<circle cx="205.7" cy="-11.6" r="2.24" fill="#00286b"/>
<circle cx="275.6" cy="-41.2" r="2.48" fill="#000919"/>
<circle cx="279.0" cy="-41.9" r="2.48" fill="#001538"/>
<circle cx="282.5" cy="-42.6" r="2.48" fill="#00276b"/>
<circle cx="358.8" cy="-45.3" r="2.72" fill="#000919"/>
<circle cx="362.3" cy="-44.7" r="2.72" fill="#001438"/>
<circle cx="365.8" cy="-44.1" r="2.72" fill="#00266b"/>
<circle cx="438.5" cy="-19.1" r="2.96" fill="#000919"/>
<circle cx="441.6" cy="-17.3" r="2.96" fill="#001438"/>
<circle cx="444.7" cy="-15.5" r="2.96" fill="#00256b"/>
<circle cx="504.0" cy="34.2" r="3.20" fill="#000919"/>
<circle cx="506.3" cy="37.0" r="3.20" fill="#001338"/>
<circle cx="508.6" cy="39.9" r="3.20" fill="#00246b"/>
<circle cx="546.5" cy="107.9" r="3.44" fill="#000819"/>
<circle cx="547.7" cy="111.4" r="3.44" fill="#001238"/>
<circle cx="548.7" cy="114.9" r="3.44" fill="#00236b"/>
<circle cx="559.9" cy="192.5" r="3.68" fill="#000819"/>
<circle cx="559.7" cy="196.2" r="3.68" fill="#001238"/>
<circle cx="559.5" cy="200.0" r="3.68" fill="#00226b"/>
<circle cx="542.1" cy="276.9" r="3.91" fill="#000819"/>
<circle cx="540.6" cy="280.4" r="3.91" fill="#001138"/>
<circle cx="539.0" cy="283.8" r="3.91" fill="#00216b"/>
<circle cx="495.0" cy="349.9" r="4.14" fill="#000719"/>
<circle cx="492.2" cy="352.6" r="4.14" fill="#001038"/>
<circle cx="489.5" cy="355.3" r="4.14" fill="#001f6b"/>
<circle cx="424.4" cy="401.5" r="4.37" fill="#000719"/>
<circle cx="420.8" cy="403.1" r="4.37" fill="#001038"/>
<circle cx="417.2" cy="404.6" r="4.37" fill="#001e6b"/>
<circle cx="339.4" cy="424.7" r="4.59" fill="#000719"/>
<circle cx="335.4" cy="424.9" r="4.59" fill="#000f38"/>
<circle cx="331.5" cy="425.0" r="4.59" fill="#001d6b"/>
<circle cx="251.1" cy="415.9" r="4.81" fill="#000619"/>
<circle cx="247.3" cy="414.6" r="4.81" fill="#000e38"/>
<circle cx="243.5" cy="413.4" r="4.81" fill="#001b6b"/>
<circle cx="171.3" cy="375.8" r="5.03" fill="#000619"/>
<circle cx="168.2" cy="373.3" r="5.03" fill="#000d38"/>
<circle cx="165.0" cy="370.7" r="5.03" fill="#00196b"/>
<circle cx="110.7" cy="309.5" r="5.24" fill="#000619"/>
<circle cx="108.6" cy="305.9" r="5.24" fill="#000c38"/>
<circle cx="106.6" cy="302.3" r="5.24" fill="#00186b"/>
<circle cx="77.6" cy="225.3" r="5.45" fill="#000519"/>
<circle cx="76.9" cy="221.2" r="5.45" fill="#000b38"/>
<circle cx="76.3" cy="217.0" r="5.45" fill="#00166b"/>
<circle cx="76.8" cy="134.2" r="5.65" fill="#000519"/>
<circle cx="77.6" cy="130.1" r="5.65" fill="#000a38"/>
<circle cx="78.5" cy="125.9" r="5.65" fill="#00146b"/>
<circle cx="108.7" cy="48.3" r="5.85" fill="#000419"/>
<circle cx="111.0" cy="44.7" r="5.85" fill="#000938"/>
<circle cx="113.4" cy="41.1" r="5.85" fill="#00116b"/>
<circle cx="169.7" cy="-21.0" r="6.05" fill="#000319"/>
<circle cx="173.2" cy="-23.6" r="6.05" fill="#000738"/>
<circle cx="176.7" cy="-26.1" r="6.05" fill="#000e6b"/>
<circle cx="251.9" cy="-64.1" r="6.24" fill="#000319"/>
<circle cx="256.1" cy="-65.3" r="6.24" fill="#000638"/>
<circle cx="260.4" cy="-66.5" r="6.24" fill="#000b6b"/>
<circle cx="344.7" cy="-75.2" r="6.42" fill="#000119"/>
<circle cx="349.2" cy="-74.8" r="6.42" fill="#000338"/>
<circle cx="353.6" cy="-74.3" r="6.42" fill="#00056b"/>
<circle cx="435.9" cy="-52.1" r="6.59" fill="#010019"/>
<circle cx="440.0" cy="-50.1" r="6.59" fill="#010038"/>
<circle cx="444.0" cy="-48.1" r="6.59" fill="#03006b"/>
<circle cx="513.4" cy="2.3" r="6.77" fill="#020019"/>
<circle cx="516.5" cy="5.7" r="6.77" fill="#050038"/>
<circle cx="519.5" cy="9.1" r="6.77" fill="#09006b"/>
<circle cx="566.6" cy="81.4" r="6.93" fill="#030019"/>
<circle cx="568.3" cy="85.7" r="6.93" fill="#070038"/>
<circle cx="569.9" cy="90.0" r="6.93" fill="#0d006b"/>
<circle cx="588.1" cy="174.8" r="7.09" fill="#040019"/>
<circle cx="588.2" cy="179.5" r="7.09" fill="#090038"/>
<circle cx="588.2" cy="184.1" r="7.09" fill="#10006b"/>
<circle cx="574.8" cy="270.3" r="7.24" fill="#040019"/>
<circle cx="573.2" cy="274.8" r="7.24" fill="#0a0038"/>
<circle cx="571.5" cy="279.2" r="7.24" fill="#13006b"/>
<circle cx="527.9" cy="355.3" r="7.39" fill="#050019"/>
<circle cx="524.8" cy="358.9" r="7.39" fill="#0b0038"/>
<circle cx="521.6" cy="362.5" r="7.39" fill="#15006b"/>
<circle cx="453.3" cy="418.3" r="7.52" fill="#050019"/>
<circle cx="449.0" cy="420.6" r="7.52" fill="#0c0038"/>
<circle cx="444.7" cy="422.8" r="7.52" fill="#17006b"/>
<circle cx="360.5" cy="450.7" r="7.65" fill="#060019"/>
<circle cx="355.6" cy="451.3" r="7.65" fill="#0d0038"/>
<circle cx="350.8" cy="451.9" r="7.65" fill="#19006b"/>
<circle cx="261.7" cy="447.8" r="7.78" fill="#060019"/>
<circle cx="256.9" cy="446.6" r="7.78" fill="#0e0038"/>
<circle cx="252.0" cy="445.3" r="7.78" fill="#1b006b"/>
<circle cx="169.9" cy="409.5" r="7.89" fill="#070019"/>
<circle cx="165.8" cy="406.6" r="7.89" fill="#0f0038"/>
<circle cx="161.7" cy="403.7" r="7.89" fill="#1c006b"/>
<circle cx="97.4" cy="340.5" r="8.00" fill="#070019"/>
<circle cx="94.5" cy="336.3" r="8.00" fill="#0f0038"/>
<circle cx="91.7" cy="332.0" r="8.00" fill="#1e006b"/>
<circle cx="54.1" cy="249.6" r="8.10" fill="#070019"/>
<circle cx="52.9" cy="244.6" r="8.10" fill="#100038"/>
<circle cx="51.8" cy="239.6" r="8.10" fill="#1f006b"/>
<circle cx="46.1" cy="148.7" r="8.20" fill="#080019"/>
<circle cx="46.8" cy="143.5" r="8.20" fill="#110038"/>
<circle cx="47.6" cy="138.3" r="8.20" fill="#20006b"/>
<circle cx="74.9" cy="51.0" r="8.28" fill="#080019"/>
<circle cx="77.4" cy="46.3" r="8.28" fill="#120038"/>
<circle cx="80.0" cy="41.7" r="8.28" fill="#22006b"/>
<circle cx="137.0" cy="-30.5" r="8.36" fill="#080019"/>
<circle cx="141.1" cy="-34.0" r="8.36" fill="#120038"/>
<circle cx="145.2" cy="-37.4" r="8.36" fill="#23006b"/>
<circle cx="224.7" cy="-84.7" r="8.43" fill="#090019"/>
<circle cx="229.8" cy="-86.5" r="8.43" fill="#130038"/>
<circle cx="234.9" cy="-88.3" r="8.43" fill="#24006b"/>
<circle cx="326.5" cy="-104.1" r="8.49" fill="#090019"/>
<circle cx="332.0" cy="-104.0" r="8.49" fill="#130038"/>
<circle cx="337.5" cy="-103.7" r="8.49" fill="#25006b"/>
<circle cx="429.2" cy="-85.7" r="8.54" fill="#090019"/>
<circle cx="434.3" cy="-83.6" r="8.54" fill="#140038"/>
<circle cx="439.4" cy="-81.4" r="8.54" fill="#26006b"/>
<circle cx="518.9" cy="-31.5" r="8.58" fill="#090019"/>
<circle cx="523.0" cy="-27.7" r="8.58" fill="#150038"/>
<circle cx="527.1" cy="-23.8" r="8.58" fill="#27006b"/>
<circle cx="583.8" cy="51.7" r="8.62" fill="#0a0019"/>
<circle cx="586.3" cy="56.8" r="8.62" fill="#150038"/>
<circle cx="588.7" cy="61.9" r="8.62" fill="#28006b"/>
<circle cx="614.8" cy="153.1" r="8.64" fill="#0a0019"/>
<circle cx="615.4" cy="158.8" r="8.64" fill="#160038"/>
<circle cx="615.8" cy="164.5" r="8.64" fill="#29006b"/>
<circle cx="607.5" cy="259.5" r="8.66" fill="#0a0019"/>
<circle cx="606.0" cy="265.1" r="8.66" fill="#160038"/>
<circle cx="604.3" cy="270.6" r="8.66" fill="#2a006b"/>
<circle cx="562.4" cy="356.8" r="8.67" fill="#0a0019"/>
<circle cx="558.9" cy="361.5" r="8.67" fill="#170038"/>
<circle cx="555.3" cy="366.1" r="8.67" fill="#2b006b"/>
<circle cx="485.1" cy="432.0" r="8.67" fill="#0a0019"/>
<circle cx="480.1" cy="435.2" r="8.67" fill="#170038"/>
<circle cx="475.0" cy="438.2" r="8.67" fill="#2c006b"/>
<circle cx="385.5" cy="474.8" r="8.67" fill="#0b0019"/>
<circle cx="379.6" cy="476.0" r="8.67" fill="#170038"/>
<circle cx="373.7" cy="477.1" r="8.67" fill="#2d006b"/>
<circle cx="276.5" cy="479.2" r="8.65" fill="#0b0019"/>
<circle cx="270.5" cy="478.2" r="8.65" fill="#180038"/>
<circle cx="264.6" cy="477.1" r="8.65" fill="#2e006b"/>
<circle cx="172.6" cy="444.2" r="8.63" fill="#0b0019"/>
<circle cx="167.3" cy="441.1" r="8.63" fill="#180038"/>
<circle cx="162.1" cy="437.9" r="8.63" fill="#2e006b"/>
<circle cx="87.6" cy="374.0" r="8.59" fill="#0b0019"/>
<circle cx="83.7" cy="369.1" r="8.59" fill="#190038"/>
<circle cx="80.0" cy="364.2" r="8.59" fill="#2f006b"/>
<circle cx="33.0" cy="277.5" r="8.55" fill="#0b0019"/>
<circle cx="31.1" cy="271.5" r="8.55" fill="#190038"/>
<circle cx="29.3" cy="265.5" r="8.55" fill="#30006b"/>
<circle cx="16.4" cy="167.3" r="8.50" fill="#0c0019"/>
<circle cx="16.8" cy="161.0" r="8.50" fill="#1a0038"/>
<circle cx="17.3" cy="154.7" r="8.50" fill="#31006b"/>
<circle cx="40.4" cy="57.8" r="8.44" fill="#0c0019"/>
<circle cx="43.1" cy="52.0" r="8.44" fill="#1a0038"/>
<circle cx="45.8" cy="46.2" r="8.44" fill="#32006b"/>
<circle cx="102.3" cy="-36.3" r="8.38" fill="#0c0019"/>
<circle cx="106.9" cy="-40.9" r="8.38" fill="#1a0038"/>
<circle cx="111.6" cy="-45.3" r="8.38" fill="#32006b"/>
<circle cx="194.3" cy="-102.5" r="8.30" fill="#0c0019"/>
<circle cx="200.2" cy="-105.1" r="8.30" fill="#1b0038"/>
<circle cx="206.3" cy="-107.6" r="8.30" fill="#33006b"/>
<circle cx="304.3" cy="-131.5" r="8.22" fill="#0c0019"/>
<circle cx="310.9" cy="-131.9" r="8.22" fill="#1b0038"/>
<circle cx="317.5" cy="-132.1" r="8.22" fill="#34006b"/>
<circle cx="418.1" cy="-119.3" r="8.13" fill="#0d0019"/>
<circle cx="424.5" cy="-117.2" r="8.13" fill="#1c0038"/>
<circle cx="430.8" cy="-115.0" r="8.13" fill="#35006b"/>
<circle cx="520.6" cy="-66.9" r="8.03" fill="#0d0019"/>
<circle cx="525.8" cy="-62.7" r="8.03" fill="#1c0038"/>
<circle cx="531.0" cy="-58.3" r="8.03" fill="#35006b"/>
<circle cx="597.9" cy="19.0" r="7.92" fill="#0d0019"/>
<circle cx="601.3" cy="24.9" r="7.92" fill="#1c0038"/>
<circle cx="604.6" cy="30.9" r="7.92" fill="#36006b"/>
<circle cx="639.7" cy="127.5" r="7.81" fill="#0d0019"/>
<circle cx="640.8" cy="134.3" r="7.81" fill="#1d0038"/>
<circle cx="641.7" cy="141.1" r="7.81" fill="#37006b"/>
<circle cx="639.9" cy="244.4" r="7.69" fill="#0d0019"/>
<circle cx="638.5" cy="251.2" r="7.69" fill="#1d0038"/>
<circle cx="636.9" cy="258.0" r="7.69" fill="#37006b"/>
<circle cx="598.1" cy="354.2" r="7.56" fill="#0d0019"/>
<circle cx="594.3" cy="360.1" r="7.56" fill="#1d0038"/>
<circle cx="590.4" cy="365.9" r="7.56" fill="#38006b"/>
<circle cx="519.5" cy="442.2" r="7.42" fill="#0d0019"/>
<circle cx="513.8" cy="446.4" r="7.42" fill="#1e0038"/>
<circle cx="508.0" cy="450.5" r="7.42" fill="#39006b"/>
<circle cx="414.0" cy="496.6" r="7.28" fill="#0e0019"/>
<circle cx="407.1" cy="498.5" r="7.28" fill="#1e0038"/>
<circle cx="400.2" cy="500.3" r="7.28" fill="#39006b"/>
<circle cx="295.5" cy="509.8" r="7.13" fill="#0e0019"/>
<circle cx="288.3" cy="509.1" r="7.13" fill="#1e0038"/>
<circle cx="281.1" cy="508.2" r="7.13" fill="#3a006b"/>
<circle cx="323.4" cy="181.4" r="8.67" fill="#00f8ff"/>
<circle cx="323.6" cy="179.8" r="8.67" fill="#00f7ff"/>
<circle cx="325.0" cy="178.4" r="8.66" fill="#00f7ff"/>
<circle cx="327.3" cy="177.9" r="8.64" fill="#00f6ff"/>
<circle cx="330.0" cy="178.7" r="8.61" fill="#00f5ff"/>
<circle cx="332.4" cy="181.0" r="8.57" fill="#00f5ff"/>
<circle cx="333.8" cy="184.6" r="8.53" fill="#00f4ff"/>
<circle cx="333.5" cy="189.1" r="8.47" fill="#00f3ff"/>
<circle cx="331.2" cy="193.5" r="8.41" fill="#00f2ff"/>
<circle cx="327.0" cy="197.1" r="8.34" fill="#00f2ff"/>
<circle cx="321.1" cy="198.9" r="8.26" fill="#00f1ff"/>
<circle cx="314.4" cy="198.3" r="8.17" fill="#00f0ff"/>
<circle cx="307.9" cy="195.0" r="8.08" fill="#00f0ff"/>
<circle cx="302.7" cy="189.1" r="7.97" fill="#00efff"/>
<circle cx="299.9" cy="181.1" r="7.86" fill="#00eeff"/>
<circle cx="300.3" cy="172.0" r="7.75" fill="#00edff"/>
<circle cx="304.2" cy="163.2" r="7.62" fill="#00edff"/>
<circle cx="311.5" cy="156.0" r="7.49" fill="#00ecff"/>
<circle cx="321.5" cy="151.8" r="7.35" fill="#00ebff"/>
<circle cx="332.9" cy="151.4" r="7.20" fill="#00eaff"/>
<circle cx="344.3" cy="155.5" r="7.05" fill="#00eaff"/>
<circle cx="353.8" cy="163.8" r="6.89" fill="#00e9ff"/>
<circle cx="359.9" cy="175.5" r="6.72" fill="#00e8ff"/>
<circle cx="361.5" cy="189.2" r="6.55" fill="#00e7ff"/>
<circle cx="357.8" cy="203.2" r="6.37" fill="#00e7ff"/>
<circle cx="349.0" cy="215.3" r="6.19" fill="#00e6ff"/>
<circle cx="335.8" cy="223.7" r="6.00" fill="#00e5ff"/>
<circle cx="320.0" cy="227.0" r="5.80" fill="#00e4ff"/>
<circle cx="303.4" cy="224.2" r="5.60" fill="#00e4ff"/>
<circle cx="288.4" cy="215.3" r="5.40" fill="#00e3ff"/>
<circle cx="277.3" cy="201.2" r="5.19" fill="#00e2ff"/>
<circle cx="271.9" cy="183.4" r="4.97" fill="#00e1ff"/>
<circle cx="273.2" cy="164.3" r="4.76" fill="#00e0ff"/>
<circle cx="281.6" cy="146.4" r="4.53" fill="#00e0ff"/>
<circle cx="296.4" cy="132.3" r="4.31" fill="#00dfff"/>
<circle cx="315.7" cy="124.2" r="4.08" fill="#00deff"/>
<circle cx="337.3" cy="123.6" r="3.85" fill="#00ddff"/>
<circle cx="358.2" cy="131.0" r="3.62" fill="#00dcff"/>
<circle cx="375.5" cy="145.8" r="3.38" fill="#00dbff"/>
<circle cx="386.6" cy="166.4" r="3.14" fill="#00dbff"/>
<circle cx="389.7" cy="190.1" r="2.90" fill="#00daff"/>
<circle cx="383.9" cy="214.0" r="2.66" fill="#00d9ff"/>
<circle cx="369.5" cy="234.7" r="2.42" fill="#00d8ff"/>
<circle cx="348.2" cy="249.2" r="2.17" fill="#00d7ff"/>
<circle cx="322.5" cy="255.2" r="1.93" fill="#00d7ff"/>
<circle cx="295.8" cy="251.5" r="1.69" fill="#00d6ff"/>
<circle cx="271.7" cy="238.2" r="1.93" fill="#00d5ff"/>
<circle cx="253.5" cy="216.6" r="2.18" fill="#00d4ff"/>
<circle cx="244.1" cy="189.4" r="2.42" fill="#00d3ff"/>
<circle cx="245.1" cy="160.1" r="2.67" fill="#00d2ff"/>
<circle cx="256.8" cy="132.5" r="2.91" fill="#00d1ff"/>
<circle cx="278.1" cy="110.5" r="3.15" fill="#00d0ff"/>
<circle cx="306.3" cy="97.3" r="3.38" fill="#00d0ff"/>
<circle cx="338.0" cy="95.1" r="3.62" fill="#00cfff"/>
<circle cx="369.0" cy="104.6" r="3.85" fill="#00ceff"/>
<circle cx="394.9" cy="124.9" r="4.09" fill="#00cdff"/>
<circle cx="412.2" cy="153.7" r="4.31" fill="#00ccff"/>
<circle cx="418.1" cy="187.3" r="4.54" fill="#00cbff"/>
<circle cx="411.5" cy="221.5" r="4.76" fill="#00caff"/>
<circle cx="392.7" cy="251.4" r="4.98" fill="#00c9ff"/>
<circle cx="364.0" cy="273.1" r="5.19" fill="#00c8ff"/>
<circle cx="328.8" cy="283.1" r="5.40" fill="#00c7ff"/>
<circle cx="291.8" cy="279.9" r="5.61" fill="#00c7ff"/>
<circle cx="257.9" cy="263.3" r="5.81" fill="#00c6ff"/>
<circle cx="231.7" cy="235.3" r="6.00" fill="#00c5ff"/>
<circle cx="217.1" cy="199.1" r="6.19" fill="#00c4ff"/>
<circle cx="216.4" cy="159.6" r="6.37" fill="#00c3ff"/>
<circle cx="230.1" cy="121.8" r="6.55" fill="#00c2ff"/>
<circle cx="256.9" cy="91.1" r="6.73" fill="#00c1ff"/>
<circle cx="293.4" cy="71.6" r="6.89" fill="#00c0ff"/>
<circle cx="335.0" cy="66.5" r="7.05" fill="#00bfff"/>
<circle cx="376.3" cy="76.7" r="7.20" fill="#00beff"/>
<circle cx="411.7" cy="101.4" r="7.35" fill="#00bdff"/>
<circle cx="436.2" cy="137.6" r="7.49" fill="#00bcff"/>
<circle cx="446.3" cy="180.8" r="7.62" fill="#00bbff"/>
<circle cx="440.2" cy="225.3" r="7.75" fill="#00baff"/>
<circle cx="418.2" cy="265.3" r="7.87" fill="#00b9ff"/>
<circle cx="382.9" cy="295.0" r="7.98" fill="#00b8ff"/>
<circle cx="338.8" cy="310.4" r="8.08" fill="#00b7ff"/>
<circle cx="291.4" cy="309.0" r="8.17" fill="#00b6ff"/>
<circle cx="247.2" cy="290.4" r="8.26" fill="#00b5ff"/>
<circle cx="212.1" cy="256.8" r="8.34" fill="#00b4ff"/>
<circle cx="191.1" cy="212.4" r="8.41" fill="#00b3ff"/>
<circle cx="187.4" cy="162.8" r="8.47" fill="#00b1ff"/>
<circle cx="201.8" cy="114.5" r="8.53" fill="#00b0ff"/>
<circle cx="232.9" cy="74.2" r="8.57" fill="#00afff"/>
<circle cx="276.9" cy="47.3" r="8.61" fill="#00aeff"/>
<circle cx="328.2" cy="37.9" r="8.64" fill="#00adff"/>
<circle cx="380.1" cy="47.6" r="8.66" fill="#00acff"/>
<circle cx="425.6" cy="75.5" r="8.67" fill="#00abff"/>
<circle cx="458.4" cy="118.3" r="8.67" fill="#00aaff"/>
<circle cx="473.9" cy="170.6" r="8.67" fill="#00a8ff"/>
<circle cx="469.6" cy="225.6" r="8.65" fill="#00a7ff"/>
<circle cx="445.7" cy="275.9" r="8.63" fill="#00a6ff"/>
<circle cx="404.9" cy="314.8" r="8.60" fill="#00a5ff"/>
<circle cx="352.3" cy="336.7" r="8.56" fill="#00a4ff"/>
<circle cx="294.8" cy="338.4" r="8.51" fill="#00a3ff"/>
<circle cx="239.9" cy="319.2" r="8.46" fill="#00a1ff"/>
<circle cx="195.1" cy="281.2" r="8.39" fill="#00a0ff"/>
<circle cx="166.6" cy="229.1" r="8.32" fill="#009fff"/>
<circle cx="158.4" cy="169.7" r="8.24" fill="#009eff"/>
<circle cx="172.3" cy="110.8" r="8.15" fill="#009cff"/>
<circle cx="206.6" cy="60.2" r="8.05" fill="#009bff"/>
<circle cx="257.3" cy="24.9" r="7.95" fill="#009aff"/>
<circle cx="317.8" cy="9.9" r="7.84" fill="#0098ff"/>
<circle cx="380.3" cy="17.6" r="7.72" fill="#0097ff"/>
<circle cx="436.3" cy="47.5" r="7.59" fill="#0096ff"/>
<circle cx="478.4" cy="95.9" r="7.46" fill="#0094ff"/>
<circle cx="500.6" cy="156.7" r="7.31" fill="#0093ff"/>
<circle cx="499.6" cy="222.1" r="7.17" fill="#0092ff"/>
<circle cx="475.0" cy="283.3" r="7.01" fill="#0090ff"/>
<circle cx="429.7" cy="332.1" r="6.85" fill="#008fff"/>
<circle cx="369.4" cy="361.7" r="6.68" fill="#008dff"/>
<circle cx="301.9" cy="367.8" r="6.51" fill="#008cff"/>
<circle cx="236.2" cy="349.2" r="6.33" fill="#008aff"/>
<circle cx="180.9" cy="308.0" r="6.14" fill="#0089ff"/>
<circle cx="143.7" cy="249.2" r="5.95" fill="#0087ff"/>
<circle cx="129.9" cy="180.4" r="5.75" fill="#0086ff"/>
<circle cx="141.8" cy="110.7" r="5.55" fill="#0084ff"/>
<circle cx="178.1" cy="49.3" r="5.35" fill="#0083ff"/>
<circle cx="234.4" cy="4.5" r="5.14" fill="#0081ff"/>
<circle cx="443.8" cy="17.7" r="4.48" fill="#007cff"/>
<circle cx="496.0" cy="70.6" r="4.25" fill="#007aff"/>
<circle cx="526.0" cy="139.3" r="4.03" fill="#0079ff"/>
<circle cx="529.5" cy="214.8" r="3.79" fill="#0077ff"/>
<circle cx="505.6" cy="287.1" r="3.56" fill="#0075ff"/>
<circle cx="457.0" cy="346.5" r="3.32" fill="#0073ff"/>
<circle cx="169.8" cy="337.1" r="2.36" fill="#006bff"/>
<circle cx="123.0" cy="272.5" r="2.11" fill="#0069ff"/>
<circle cx="102.3" cy="194.8" r="1.87" fill="#0067ff"/>
<circle cx="110.7" cy="114.3" r="1.75" fill="#0065ff"/>
<circle cx="147.7" cy="41.7" r="1.99" fill="#0063ff"/>
<circle cx="510.8" cy="42.8" r="3.20" fill="#0056ff"/>
<circle cx="549.8" cy="118.5" r="3.44" fill="#0054ff"/>
<circle cx="559.2" cy="203.7" r="3.68" fill="#0051ff"/>
<circle cx="537.3" cy="287.2" r="3.91" fill="#004eff"/>
<circle cx="486.7" cy="357.9" r="4.14" fill="#004bff"/>
<circle cx="161.9" cy="368.1" r="5.03" fill="#003dff"/>
<circle cx="104.6" cy="298.7" r="5.24" fill="#0038ff"/>
<circle cx="75.7" cy="212.9" r="5.45" fill="#0034ff"/>
<circle cx="79.5" cy="121.8" r="5.65" fill="#002fff"/>
<circle cx="115.8" cy="37.6" r="5.85" fill="#0029ff"/>
<circle cx="522.5" cy="12.5" r="6.77" fill="#1600ff"/>
<circle cx="571.5" cy="94.3" r="6.93" fill="#1f00ff"/>
<circle cx="588.1" cy="188.8" r="7.09" fill="#2700ff"/>
<circle cx="569.7" cy="283.6" r="7.24" fill="#2d00ff"/>
<circle cx="518.3" cy="366.0" r="7.39" fill="#3200ff"/>
<circle cx="89.0" cy="327.7" r="8.00" fill="#4600ff"/>
<circle cx="50.8" cy="234.5" r="8.10" fill="#4a00ff"/>
<circle cx="48.4" cy="133.2" r="8.20" fill="#4d00ff"/>
<circle cx="82.7" cy="37.1" r="8.28" fill="#5000ff"/>
<circle cx="591.0" cy="67.1" r="8.62" fill="#6000ff"/>
<circle cx="616.0" cy="170.2" r="8.64" fill="#6200ff"/>
<circle cx="602.5" cy="276.1" r="8.66" fill="#6400ff"/>
<circle cx="551.7" cy="370.7" r="8.67" fill="#6600ff"/>
<circle cx="76.3" cy="359.2" r="8.59" fill="#7100ff"/>
<circle cx="27.7" cy="259.5" r="8.55" fill="#7300ff"/>
<circle cx="17.9" cy="148.4" r="8.50" fill="#7400ff"/>
<circle cx="48.7" cy="40.5" r="8.44" fill="#7600ff"/>
<circle cx="607.8" cy="36.9" r="7.92" fill="#8100ff"/>
<circle cx="642.5" cy="148.0" r="7.81" fill="#8200ff"/>
<circle cx="635.2" cy="264.7" r="7.69" fill="#8400ff"/>
<circle cx="586.4" cy="371.6" r="7.56" fill="#8500ff"/>
</svg>
<div style="position:absolute;left:1883px;top:490px;width:648px;height:2px;background:#606060"></div>
<div style="position:absolute;left:1885.5px;top:520.73px;font-size:29.5px;line-height:29.5px;color:#dedede;font-weight:normal;white-space:nowrap;-webkit-text-stroke:0.6px #dedede;">Hue</div>
<div class="sl" style="top:516px"><div class="f" style="width:213.2px"></div></div>
<div style="position:absolute;left:2219.00px;width:200px;text-align:center;top:522.24px;font-size:28.3px;line-height:28.3px;color:#ffffff;white-space:nowrap;-webkit-text-stroke:0.6px #ffffff">0.51</div>
<div style="position:absolute;left:1885.5px;top:584.73px;font-size:29.5px;line-height:29.5px;color:#dedede;font-weight:normal;white-space:nowrap;-webkit-text-stroke:0.6px #dedede;">Saturation</div>
<div class="sl" style="top:580px"><div class="f" style="width:418.0px"></div></div>
<div style="position:absolute;left:2219.00px;width:200px;text-align:center;top:586.24px;font-size:28.3px;line-height:28.3px;color:#ffffff;white-space:nowrap;-webkit-text-stroke:0.6px #ffffff">1</div>
<div style="position:absolute;left:1885.5px;top:657.33px;font-size:29.5px;line-height:29.5px;color:#dedede;font-weight:normal;white-space:nowrap;-webkit-text-stroke:0.6px #dedede;">Shape Mode</div>
<div style="position:absolute;left:2110px;top:645px;width:418px;height:54px;border-radius:14px;background:#2b2b2b;box-shadow:inset 0 2px 5px rgba(0,0,0,.25),0 2px 0 #4a4a4a"></div>
<div style="position:absolute;left:2126.5px;top:658.61px;font-size:30px;line-height:30px;color:#dcdcdc;font-weight:normal;white-space:nowrap;-webkit-text-stroke:0.6px #dcdcdc;">Circle</div>
<svg style="position:absolute;left:2493px;top:667px" width="21" height="13" viewBox="0 0 21 13"><path d="M1.5 1.5 H19.5 L10.5 11.5 Z" fill="#ddd" stroke="#ddd" stroke-width="1.5" stroke-linejoin="round"/></svg>
<div style="position:absolute;left:1885.5px;top:732.53px;font-size:29.5px;line-height:29.5px;color:#dedede;font-weight:normal;white-space:nowrap;-webkit-text-stroke:0.6px #dedede;">Beat Mode</div>
<div class="tg" style="top:724px"><div class="k"></div></div>
<div style="position:absolute;left:1885.5px;top:800.73px;font-size:29.5px;line-height:29.5px;color:#dedede;font-weight:normal;white-space:nowrap;-webkit-text-stroke:0.6px #dedede;">Target Range</div>
<div class="sl" style="top:796px"><div class="f" style="width:81.1px"></div></div>
<div style="position:absolute;left:2219.00px;width:200px;text-align:center;top:802.24px;font-size:28.3px;line-height:28.3px;color:#ffffff;white-space:nowrap;-webkit-text-stroke:0.6px #ffffff">0.194</div>
<div style="position:absolute;left:1885.5px;top:869.13px;font-size:29.5px;line-height:29.5px;color:#dedede;font-weight:normal;white-space:nowrap;-webkit-text-stroke:0.6px #dedede;">Outline Mode</div>
<div class="tg" style="top:860.5px"><div class="k"></div></div>
<div style="position:absolute;left:1885.5px;top:936.93px;font-size:29.5px;line-height:29.5px;color:#dedede;font-weight:normal;white-space:nowrap;-webkit-text-stroke:0.6px #dedede;">Blur</div>
<div class="sl" style="top:932px"><div class="f" style="width:79.4px"></div></div>
<div style="position:absolute;left:2219.00px;width:200px;text-align:center;top:938.44px;font-size:28.3px;line-height:28.3px;color:#ffffff;white-space:nowrap;-webkit-text-stroke:0.6px #ffffff">0.19</div>
<div style="position:absolute;left:1885.5px;top:1001.03px;font-size:29.5px;line-height:29.5px;color:#dedede;font-weight:normal;white-space:nowrap;-webkit-text-stroke:0.6px #dedede;">Speed</div>
<div class="sl" style="top:996px"><div class="f" style="width:37.6px"></div></div>
<div style="position:absolute;left:2219.00px;width:200px;text-align:center;top:1002.54px;font-size:28.3px;line-height:28.3px;color:#ffffff;white-space:nowrap;-webkit-text-stroke:0.6px #ffffff">0.09</div>
<div style="position:absolute;left:1885.5px;top:1065.13px;font-size:29.5px;line-height:29.5px;color:#dedede;font-weight:normal;white-space:nowrap;-webkit-text-stroke:0.6px #dedede;">Size</div>
<div class="sl" style="top:1060px"><div class="f" style="width:175.6px"></div></div>
<div style="position:absolute;left:2219.00px;width:200px;text-align:center;top:1066.64px;font-size:28.3px;line-height:28.3px;color:#ffffff;white-space:nowrap;-webkit-text-stroke:0.6px #ffffff">0.42</div>
</div></body></html>
